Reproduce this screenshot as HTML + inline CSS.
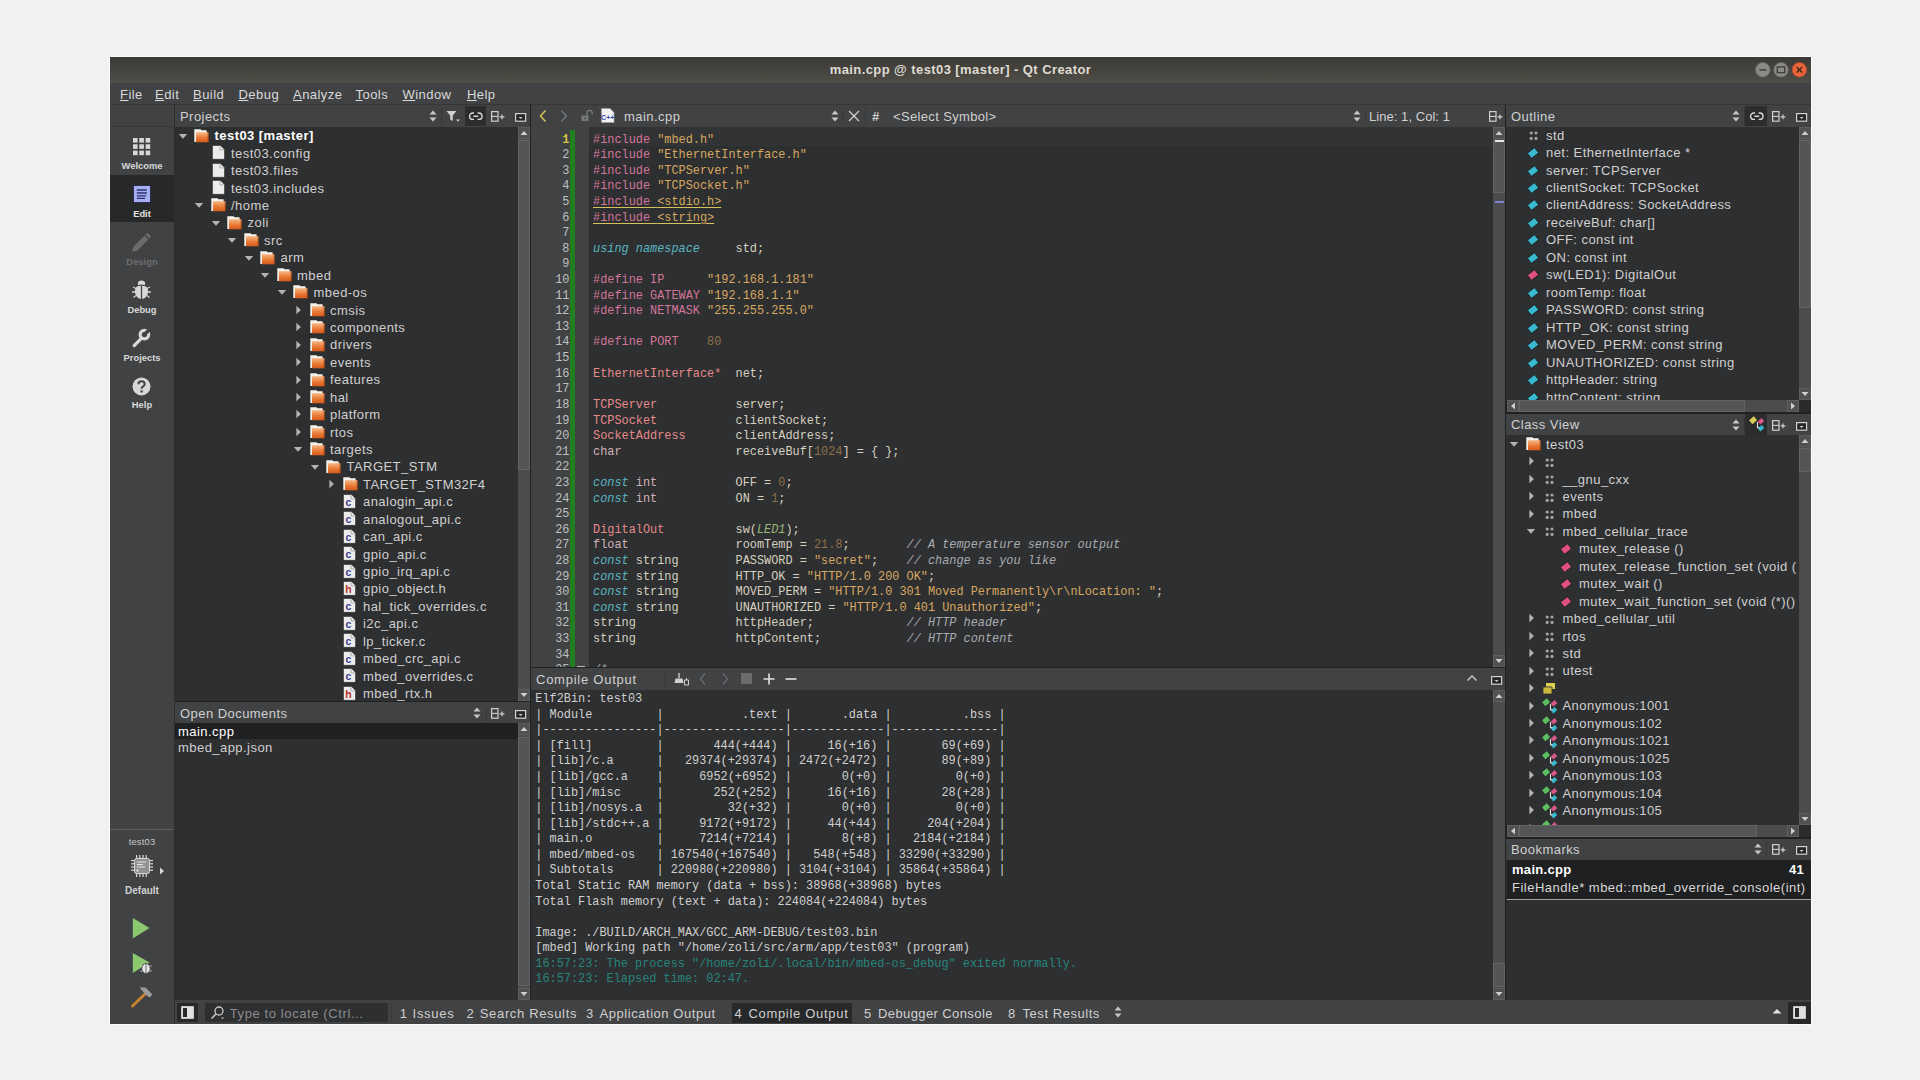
<!DOCTYPE html><html><head><meta charset="utf-8"><title>Qt Creator</title><style>
*{box-sizing:border-box;margin:0;padding:0}
html,body{width:1920px;height:1080px;overflow:hidden;background:#f1f1f1;font-family:"Liberation Sans",sans-serif}
.a{position:absolute}
.t{position:absolute;font-family:"Liberation Sans",sans-serif;font-size:13px;letter-spacing:0.45px;color:#d0d0d0;white-space:pre;line-height:16px;height:16px}
.m{position:absolute;font-family:"Liberation Mono",monospace;font-size:11.88px;white-space:pre;line-height:15.58px;color:#d6cfba}
svg{position:absolute;overflow:visible}
</style></head><body><div class="a" style="left:109px;top:56px;width:1703px;height:969px;background:#fbfbfb;"></div><div class="a" style="left:110px;top:57px;width:1701px;height:967px;background:#404244;"></div><div class="a" style="left:110px;top:57px;width:1701px;height:26px;background:linear-gradient(#3b3a36,#4e4d46);"></div><div class="t" style="left:110px;top:62.00px;color:#dfdbd2;width:1701px;text-align:center;font-weight:bold;letter-spacing:0.42px">main.cpp @ test03 [master] - Qt Creator</div><svg style="left:1755px;top:62px" width="52" height="16"><circle cx="7.8" cy="7.8" r="7.2" fill="#8b8a85" stroke="#6e6d69" stroke-width="0.8"/><rect x="4.3" y="7.2" width="7" height="1.4" fill="#3c3b37"/><circle cx="26" cy="7.8" r="7.2" fill="#8b8a85" stroke="#6e6d69" stroke-width="0.8"/><rect x="22.3" y="4.9" width="7.4" height="5.8" fill="none" stroke="#3c3b37" stroke-width="1.3"/><circle cx="44.4" cy="7.8" r="7.2" fill="#e8643a" stroke="#b84a27" stroke-width="0.8"/><path d="M41.6 5 L47.2 10.6 M47.2 5 L41.6 10.6" stroke="#3c2a20" stroke-width="1.4"/></svg><div class="t" style="left:120px;top:87px;color:#dadada"><span style="text-decoration:underline;text-underline-offset:1px">F</span>ile</div><div class="t" style="left:155px;top:87px;color:#dadada"><span style="text-decoration:underline;text-underline-offset:1px">E</span>dit</div><div class="t" style="left:193px;top:87px;color:#dadada"><span style="text-decoration:underline;text-underline-offset:1px">B</span>uild</div><div class="t" style="left:238.5px;top:87px;color:#dadada"><span style="text-decoration:underline;text-underline-offset:1px">D</span>ebug</div><div class="t" style="left:293px;top:87px;color:#dadada"><span style="text-decoration:underline;text-underline-offset:1px">A</span>nalyze</div><div class="t" style="left:355.5px;top:87px;color:#dadada"><span style="text-decoration:underline;text-underline-offset:1px">T</span>ools</div><div class="t" style="left:402.5px;top:87px;color:#dadada"><span style="text-decoration:underline;text-underline-offset:1px">W</span>indow</div><div class="t" style="left:467px;top:87px;color:#dadada"><span style="text-decoration:underline;text-underline-offset:1px">H</span>elp</div><svg width="0" height="0" style="position:absolute"><defs><linearGradient id="fg" x1="0" y1="0" x2="0" y2="1"><stop offset="0" stop-color="#f8b888"/><stop offset="0.55" stop-color="#e87a35"/><stop offset="1" stop-color="#d65a1c"/></linearGradient></defs></svg><div class="a" style="left:110px;top:105px;width:65px;height:919px;background:#404244;"></div><div class="a" style="left:174px;top:105px;width:1px;height:919px;background:#2b2c2e;"></div><div class="a" style="left:110px;top:104px;width:1701px;height:1px;background:#353638;"></div><div class="a" style="left:110px;top:126px;width:64px;height:1px;background:#353638;"></div><div class="a" style="left:110px;top:175px;width:64px;height:47px;background:#262829;"></div><svg style="left:131.6px;top:137.3px" width="20" height="20" viewBox="0 0 20 20"><rect x="1.0" y="1.0" width="4.6" height="4.6" fill="#d8d8d8"/><rect x="1.0" y="7.3" width="4.6" height="4.6" fill="#d8d8d8"/><rect x="1.0" y="13.6" width="4.6" height="4.6" fill="#d8d8d8"/><rect x="7.3" y="1.0" width="4.6" height="4.6" fill="#d8d8d8"/><rect x="7.3" y="7.3" width="4.6" height="4.6" fill="#d8d8d8"/><rect x="7.3" y="13.6" width="4.6" height="4.6" fill="#d8d8d8"/><rect x="13.6" y="1.0" width="4.6" height="4.6" fill="#d8d8d8"/><rect x="13.6" y="7.3" width="4.6" height="4.6" fill="#d8d8d8"/><rect x="13.6" y="13.6" width="4.6" height="4.6" fill="#d8d8d8"/></svg><div class="a" style="left:110px;top:160px;width:64px;text-align:center;font:bold 9.4px Liberation Sans;line-height:12px;color:#d8d8d8;white-space:pre">Welcome</div><svg style="left:132.5px;top:185.2px" width="18" height="18" viewBox="0 0 18 18"><rect x="0.4" y="0.4" width="17.2" height="17.2" fill="#a6aef2" stroke="#1a1c3a" stroke-width="0.8"/><path d="M3.8 5 H13.8 M3.8 8 H13.8 M3.8 10.8 H13.2 M3.8 13.4 H12" stroke="#283070" stroke-width="1.3"/></svg><div class="a" style="left:110px;top:208px;width:64px;text-align:center;font:bold 9.4px Liberation Sans;line-height:12px;color:#e0e0e0;white-space:pre">Edit</div><svg style="left:130px;top:231px" width="22" height="23" viewBox="0 0 22 23"><path d="M2 21 L3.6 15.6 L14.6 4.6 L18.4 8.4 L7.4 19.4 Z" fill="#6a6c6e"/><path d="M15.6 3.6 L17.4 1.8 L21.2 5.6 L19.4 7.4 Z" fill="#6a6c6e"/></svg><div class="a" style="left:110px;top:256px;width:64px;text-align:center;font:bold 9.4px Liberation Sans;line-height:12px;color:#6c6e70;white-space:pre">Design</div><svg style="left:131px;top:279px" width="21" height="21" viewBox="0 0 21 21"><path d="M2 8 L5 9.5 M19 8 L16 9.5 M1 13 H4.5 M20 13 H16.5 M2.5 18.5 L5 16.5 M18.5 18.5 L16 16.5" stroke="#d0d0d0" stroke-width="1.3"/><ellipse cx="10.5" cy="4.6" rx="3.6" ry="3.2" fill="#d8d8d8"/><ellipse cx="10.5" cy="12.6" rx="6.6" ry="7.4" fill="#d8d8d8"/><path d="M4.5 7.6 Q10.5 4.6 16.5 7.6" stroke="#404244" stroke-width="1.1" fill="none"/><path d="M10.5 7 V20.5" stroke="#404244" stroke-width="1.3"/></svg><div class="a" style="left:110px;top:304px;width:64px;text-align:center;font:bold 9.4px Liberation Sans;line-height:12px;color:#d8d8d8;white-space:pre">Debug</div><svg style="left:132px;top:327px" width="21" height="21" viewBox="0 0 21 21"><path d="M2.2 18.6 L9.6 11.2" stroke="#d8d8d8" stroke-width="3.2" stroke-linecap="round"/><circle cx="12.4" cy="7.6" r="4.3" stroke="#d8d8d8" stroke-width="3.2" fill="none"/><rect x="10.6" y="-1.5" width="3.6" height="9.1" transform="rotate(45 12.4 7.6)" fill="#404244"/></svg><div class="a" style="left:110px;top:352px;width:64px;text-align:center;font:bold 9.4px Liberation Sans;line-height:12px;color:#d8d8d8;white-space:pre">Projects</div><svg style="left:132px;top:377px" width="19" height="19" viewBox="0 0 19 19"><circle cx="9.5" cy="9.5" r="9" fill="#d8d8d8"/><path d="M6.4 7.2 Q6.4 4.2 9.6 4.2 Q12.7 4.2 12.7 7 Q12.7 8.6 10.8 9.6 Q9.6 10.3 9.6 11.8" fill="none" stroke="#404244" stroke-width="2"/><rect x="8.5" y="13.3" width="2.2" height="2.2" fill="#404244"/></svg><div class="a" style="left:110px;top:399px;width:64px;text-align:center;font:bold 9.4px Liberation Sans;line-height:12px;color:#d8d8d8;white-space:pre">Help</div><div class="a" style="left:110px;top:829px;width:64px;height:1.2px;background:#5a5c5e;"></div><div class="a" style="left:110px;top:836px;width:64px;text-align:center;font:9.4px Liberation Sans;line-height:12px;color:#c8c8c8;letter-spacing:0.2px">test03</div><svg style="left:130px;top:854px" width="24" height="24" viewBox="0 0 24 24"><rect x="4.5" y="4.5" width="15" height="15" rx="2" fill="#8e9092" stroke="#d8d8d8" stroke-width="1"/><rect x="6.0" y="1" width="1.2" height="3" fill="#d8d8d8"/><rect x="6.0" y="20" width="1.2" height="3" fill="#d8d8d8"/><rect x="1" y="6.0" width="3" height="1.2" fill="#d8d8d8"/><rect x="20" y="6.0" width="3" height="1.2" fill="#d8d8d8"/><rect x="9.2" y="1" width="1.2" height="3" fill="#d8d8d8"/><rect x="9.2" y="20" width="1.2" height="3" fill="#d8d8d8"/><rect x="1" y="9.2" width="3" height="1.2" fill="#d8d8d8"/><rect x="20" y="9.2" width="3" height="1.2" fill="#d8d8d8"/><rect x="12.4" y="1" width="1.2" height="3" fill="#d8d8d8"/><rect x="12.4" y="20" width="1.2" height="3" fill="#d8d8d8"/><rect x="1" y="12.4" width="3" height="1.2" fill="#d8d8d8"/><rect x="20" y="12.4" width="3" height="1.2" fill="#d8d8d8"/><rect x="15.600000000000001" y="1" width="1.2" height="3" fill="#d8d8d8"/><rect x="15.600000000000001" y="20" width="1.2" height="3" fill="#d8d8d8"/><rect x="1" y="15.600000000000001" width="3" height="1.2" fill="#d8d8d8"/><rect x="20" y="15.600000000000001" width="3" height="1.2" fill="#d8d8d8"/><path d="M7 8 H16 M7 10.5 H13 M7 13 H15" stroke="#e8e8e8" stroke-width="1"/><rect x="6.5" y="15.5" width="2" height="2" fill="#e8e8e8"/></svg><svg style="left:159px;top:867px" width="6" height="8" viewBox="0 0 6 8"><path d="M1 0.5 L5 4 L1 7.5 Z" fill="#d8d8d8"/></svg><div class="a" style="left:110px;top:885px;width:64px;text-align:center;font:bold 10px Liberation Sans;line-height:12px;color:#d0d0d0">Default</div><svg style="left:132px;top:917px" width="19" height="23" viewBox="0 0 19 23"><path d="M0.8 1 L17.5 11 L0.8 21.5 Z" fill="#8cc870"/></svg><svg style="left:132px;top:952px" width="19" height="23" viewBox="0 0 19 23"><path d="M0.8 1 L17.5 10.5 L0.8 21 Z" fill="#8cc870"/><path d="M8.5 14 H19.5 M8.5 19 H19.5" stroke="#e8e8e8" stroke-width="1.1"/><ellipse cx="14" cy="16.5" rx="4.2" ry="5" fill="#e8e8e8" stroke="#404244" stroke-width="0.9"/><path d="M14 12 V21.5" stroke="#7a7c7e" stroke-width="1.2"/></svg><svg style="left:128px;top:982px" width="26" height="28" viewBox="0 0 26 28"><path d="M4.5 24 L17 12" stroke="#c8842c" stroke-width="3" stroke-linecap="round"/><path d="M11.5 5.5 L17.5 5.5 L24.5 12.5 L21.5 15.5 L17.5 12.5 Z" fill="#9a9c9e"/></svg><div class="a" style="left:175px;top:105px;width:355px;height:22px;background:#404244;"></div><div class="t" style="left:180px;top:108.50px;color:#d0d0d0;">Projects</div><svg style="left:428px;top:109px" width="10" height="14" viewBox="0 0 10 14"><path d="M1.5 5.5 L5 1.5 L8.5 5.5 Z M1.5 8.5 L5 12.5 L8.5 8.5 Z" fill="#c8c8c8"/></svg><div class="a" style="left:441px;top:108px;width:1px;height:16px;background:#353739;"></div><svg style="left:446px;top:110px" width="14" height="13" viewBox="0 0 14 13"><path d="M0.5 1 H10.5 L6.8 5.5 V11 L4.2 9.5 V5.5 Z" fill="#d0d0d0"/><path d="M10 9.5 L12 11.8 L13.8 9.5 Z" fill="#d0d0d0"/></svg><div class="a" style="left:465px;top:106px;width:21px;height:20px;background:#2b2c2e;"></div><svg style="left:468.5px;top:111.5px" width="14" height="9" viewBox="0 0 14 9"><path d="M5 1 H3.8 A3.2 3.2 0 0 0 3.8 7.4 H5 M8.6 1 H9.8 A3.2 3.2 0 0 1 9.8 7.4 H8.6 M4.4 4.2 H9.2" fill="none" stroke="#d8d8d8" stroke-width="1.4"/></svg><svg style="left:491px;top:111px" width="15" height="11" viewBox="0 0 15 11"><rect x="0.6" y="0.6" width="6.4" height="9.6" fill="none" stroke="#d0d0d0" stroke-width="1.2"/><path d="M0.6 5.4 H7" stroke="#d0d0d0" stroke-width="1.1"/><path d="M8.6 5.8 H13.4 M11 3.4 V8.2" stroke="#d0d0d0" stroke-width="1.2"/></svg><svg style="left:514.5px;top:112.5px" width="12" height="10" viewBox="0 0 12 10"><rect x="0.6" y="0.6" width="10" height="7.6" fill="#262728" stroke="#d0d0d0" stroke-width="1.2"/><path d="M3.6 4 H7.6 L5.6 6 Z" fill="#d0d0d0"/></svg><div class="a" style="left:175px;top:127px;width:343px;height:574px;background:#2e2f30;"></div><div class="a" style="left:175px;top:127px;width:343px;height:574px;overflow:hidden"><div class="a" style="left:-175px;top:-127px;width:1920px;height:1080px"><svg style="left:177.5px;top:131.5px" width="10" height="8" viewBox="0 0 10 8"><path d="M0.8 2 L9.2 2 L5 6.8 Z" fill="#b4b4b4"/></svg><svg style="left:194.0px;top:128.5px" width="15" height="14" viewBox="0 0 15 14"><path d="M0.3 0.3 H6.5 L7.5 1.3 H12.6 V12.9 H0.3 Z" fill="#f6f2ea"/><path d="M2 3.2 H14.6 V13.3 H2 Z" fill="url(#fg)"/><path d="M14.2 3.2 V13.3" stroke="#8a3a10" stroke-width="0.8"/></svg><div class="t" style="left:214.5px;top:128.30px;color:#ffffff;font-weight:bold">test03 [master]</div><svg style="left:211.7px;top:145.23000000000002px" width="13" height="15" viewBox="0 0 13 15"><path d="M0.5 0.5 H8.6 L12.5 4.4 V14.3 H0.5 Z" fill="#ececec" stroke="#1e1e1e" stroke-width="0.5"/><path d="M8.1 0.8 V4.9 H12.2" fill="none" stroke="#9a9a9a" stroke-width="0.8"/></svg><div class="t" style="left:231.0px;top:145.73px;color:#d0d0d0;">test03.config</div><svg style="left:211.7px;top:162.66000000000003px" width="13" height="15" viewBox="0 0 13 15"><path d="M0.5 0.5 H8.6 L12.5 4.4 V14.3 H0.5 Z" fill="#ececec" stroke="#1e1e1e" stroke-width="0.5"/><path d="M8.1 0.8 V4.9 H12.2" fill="none" stroke="#9a9a9a" stroke-width="0.8"/></svg><div class="t" style="left:231.0px;top:163.16px;color:#d0d0d0;">test03.files</div><svg style="left:211.7px;top:180.09px" width="13" height="15" viewBox="0 0 13 15"><path d="M0.5 0.5 H8.6 L12.5 4.4 V14.3 H0.5 Z" fill="#ececec" stroke="#1e1e1e" stroke-width="0.5"/><path d="M8.1 0.8 V4.9 H12.2" fill="none" stroke="#9a9a9a" stroke-width="0.8"/></svg><div class="t" style="left:231.0px;top:180.59px;color:#d0d0d0;">test03.includes</div><svg style="left:194.0px;top:201.22px" width="10" height="8" viewBox="0 0 10 8"><path d="M0.8 2 L9.2 2 L5 6.8 Z" fill="#b4b4b4"/></svg><svg style="left:210.5px;top:198.22px" width="15" height="14" viewBox="0 0 15 14"><path d="M0.3 0.3 H6.5 L7.5 1.3 H12.6 V12.9 H0.3 Z" fill="#f6f2ea"/><path d="M2 3.2 H14.6 V13.3 H2 Z" fill="url(#fg)"/><path d="M14.2 3.2 V13.3" stroke="#8a3a10" stroke-width="0.8"/></svg><div class="t" style="left:231.0px;top:198.02px;color:#d0d0d0;">/home</div><svg style="left:210.5px;top:218.65px" width="10" height="8" viewBox="0 0 10 8"><path d="M0.8 2 L9.2 2 L5 6.8 Z" fill="#b4b4b4"/></svg><svg style="left:227.0px;top:215.65px" width="15" height="14" viewBox="0 0 15 14"><path d="M0.3 0.3 H6.5 L7.5 1.3 H12.6 V12.9 H0.3 Z" fill="#f6f2ea"/><path d="M2 3.2 H14.6 V13.3 H2 Z" fill="url(#fg)"/><path d="M14.2 3.2 V13.3" stroke="#8a3a10" stroke-width="0.8"/></svg><div class="t" style="left:247.5px;top:215.45px;color:#d0d0d0;">zoli</div><svg style="left:227.0px;top:236.07999999999998px" width="10" height="8" viewBox="0 0 10 8"><path d="M0.8 2 L9.2 2 L5 6.8 Z" fill="#b4b4b4"/></svg><svg style="left:243.5px;top:233.07999999999998px" width="15" height="14" viewBox="0 0 15 14"><path d="M0.3 0.3 H6.5 L7.5 1.3 H12.6 V12.9 H0.3 Z" fill="#f6f2ea"/><path d="M2 3.2 H14.6 V13.3 H2 Z" fill="url(#fg)"/><path d="M14.2 3.2 V13.3" stroke="#8a3a10" stroke-width="0.8"/></svg><div class="t" style="left:264.0px;top:232.88px;color:#d0d0d0;">src</div><svg style="left:243.5px;top:253.51px" width="10" height="8" viewBox="0 0 10 8"><path d="M0.8 2 L9.2 2 L5 6.8 Z" fill="#b4b4b4"/></svg><svg style="left:260.0px;top:250.51px" width="15" height="14" viewBox="0 0 15 14"><path d="M0.3 0.3 H6.5 L7.5 1.3 H12.6 V12.9 H0.3 Z" fill="#f6f2ea"/><path d="M2 3.2 H14.6 V13.3 H2 Z" fill="url(#fg)"/><path d="M14.2 3.2 V13.3" stroke="#8a3a10" stroke-width="0.8"/></svg><div class="t" style="left:280.5px;top:250.31px;color:#d0d0d0;">arm</div><svg style="left:260.0px;top:270.94px" width="10" height="8" viewBox="0 0 10 8"><path d="M0.8 2 L9.2 2 L5 6.8 Z" fill="#b4b4b4"/></svg><svg style="left:276.5px;top:267.94px" width="15" height="14" viewBox="0 0 15 14"><path d="M0.3 0.3 H6.5 L7.5 1.3 H12.6 V12.9 H0.3 Z" fill="#f6f2ea"/><path d="M2 3.2 H14.6 V13.3 H2 Z" fill="url(#fg)"/><path d="M14.2 3.2 V13.3" stroke="#8a3a10" stroke-width="0.8"/></svg><div class="t" style="left:297.0px;top:267.74px;color:#d0d0d0;">mbed</div><svg style="left:276.5px;top:288.37px" width="10" height="8" viewBox="0 0 10 8"><path d="M0.8 2 L9.2 2 L5 6.8 Z" fill="#b4b4b4"/></svg><svg style="left:293.0px;top:285.37px" width="15" height="14" viewBox="0 0 15 14"><path d="M0.3 0.3 H6.5 L7.5 1.3 H12.6 V12.9 H0.3 Z" fill="#f6f2ea"/><path d="M2 3.2 H14.6 V13.3 H2 Z" fill="url(#fg)"/><path d="M14.2 3.2 V13.3" stroke="#8a3a10" stroke-width="0.8"/></svg><div class="t" style="left:313.5px;top:285.17px;color:#d0d0d0;">mbed-os</div><svg style="left:294.0px;top:304.8px" width="8" height="10" viewBox="0 0 8 10"><path d="M2.4 0.8 L6.9 5 L2.4 9.2 Z" fill="#b4b4b4"/></svg><svg style="left:309.5px;top:302.8px" width="15" height="14" viewBox="0 0 15 14"><path d="M0.3 0.3 H6.5 L7.5 1.3 H12.6 V12.9 H0.3 Z" fill="#f6f2ea"/><path d="M2 3.2 H14.6 V13.3 H2 Z" fill="url(#fg)"/><path d="M14.2 3.2 V13.3" stroke="#8a3a10" stroke-width="0.8"/></svg><div class="t" style="left:330.0px;top:302.60px;color:#d0d0d0;">cmsis</div><svg style="left:294.0px;top:322.22999999999996px" width="8" height="10" viewBox="0 0 8 10"><path d="M2.4 0.8 L6.9 5 L2.4 9.2 Z" fill="#b4b4b4"/></svg><svg style="left:309.5px;top:320.22999999999996px" width="15" height="14" viewBox="0 0 15 14"><path d="M0.3 0.3 H6.5 L7.5 1.3 H12.6 V12.9 H0.3 Z" fill="#f6f2ea"/><path d="M2 3.2 H14.6 V13.3 H2 Z" fill="url(#fg)"/><path d="M14.2 3.2 V13.3" stroke="#8a3a10" stroke-width="0.8"/></svg><div class="t" style="left:330.0px;top:320.03px;color:#d0d0d0;">components</div><svg style="left:294.0px;top:339.66px" width="8" height="10" viewBox="0 0 8 10"><path d="M2.4 0.8 L6.9 5 L2.4 9.2 Z" fill="#b4b4b4"/></svg><svg style="left:309.5px;top:337.66px" width="15" height="14" viewBox="0 0 15 14"><path d="M0.3 0.3 H6.5 L7.5 1.3 H12.6 V12.9 H0.3 Z" fill="#f6f2ea"/><path d="M2 3.2 H14.6 V13.3 H2 Z" fill="url(#fg)"/><path d="M14.2 3.2 V13.3" stroke="#8a3a10" stroke-width="0.8"/></svg><div class="t" style="left:330.0px;top:337.46px;color:#d0d0d0;">drivers</div><svg style="left:294.0px;top:357.09px" width="8" height="10" viewBox="0 0 8 10"><path d="M2.4 0.8 L6.9 5 L2.4 9.2 Z" fill="#b4b4b4"/></svg><svg style="left:309.5px;top:355.09px" width="15" height="14" viewBox="0 0 15 14"><path d="M0.3 0.3 H6.5 L7.5 1.3 H12.6 V12.9 H0.3 Z" fill="#f6f2ea"/><path d="M2 3.2 H14.6 V13.3 H2 Z" fill="url(#fg)"/><path d="M14.2 3.2 V13.3" stroke="#8a3a10" stroke-width="0.8"/></svg><div class="t" style="left:330.0px;top:354.89px;color:#d0d0d0;">events</div><svg style="left:294.0px;top:374.52px" width="8" height="10" viewBox="0 0 8 10"><path d="M2.4 0.8 L6.9 5 L2.4 9.2 Z" fill="#b4b4b4"/></svg><svg style="left:309.5px;top:372.52px" width="15" height="14" viewBox="0 0 15 14"><path d="M0.3 0.3 H6.5 L7.5 1.3 H12.6 V12.9 H0.3 Z" fill="#f6f2ea"/><path d="M2 3.2 H14.6 V13.3 H2 Z" fill="url(#fg)"/><path d="M14.2 3.2 V13.3" stroke="#8a3a10" stroke-width="0.8"/></svg><div class="t" style="left:330.0px;top:372.32px;color:#d0d0d0;">features</div><svg style="left:294.0px;top:391.95px" width="8" height="10" viewBox="0 0 8 10"><path d="M2.4 0.8 L6.9 5 L2.4 9.2 Z" fill="#b4b4b4"/></svg><svg style="left:309.5px;top:389.95px" width="15" height="14" viewBox="0 0 15 14"><path d="M0.3 0.3 H6.5 L7.5 1.3 H12.6 V12.9 H0.3 Z" fill="#f6f2ea"/><path d="M2 3.2 H14.6 V13.3 H2 Z" fill="url(#fg)"/><path d="M14.2 3.2 V13.3" stroke="#8a3a10" stroke-width="0.8"/></svg><div class="t" style="left:330.0px;top:389.75px;color:#d0d0d0;">hal</div><svg style="left:294.0px;top:409.38px" width="8" height="10" viewBox="0 0 8 10"><path d="M2.4 0.8 L6.9 5 L2.4 9.2 Z" fill="#b4b4b4"/></svg><svg style="left:309.5px;top:407.38px" width="15" height="14" viewBox="0 0 15 14"><path d="M0.3 0.3 H6.5 L7.5 1.3 H12.6 V12.9 H0.3 Z" fill="#f6f2ea"/><path d="M2 3.2 H14.6 V13.3 H2 Z" fill="url(#fg)"/><path d="M14.2 3.2 V13.3" stroke="#8a3a10" stroke-width="0.8"/></svg><div class="t" style="left:330.0px;top:407.18px;color:#d0d0d0;">platform</div><svg style="left:294.0px;top:426.81px" width="8" height="10" viewBox="0 0 8 10"><path d="M2.4 0.8 L6.9 5 L2.4 9.2 Z" fill="#b4b4b4"/></svg><svg style="left:309.5px;top:424.81px" width="15" height="14" viewBox="0 0 15 14"><path d="M0.3 0.3 H6.5 L7.5 1.3 H12.6 V12.9 H0.3 Z" fill="#f6f2ea"/><path d="M2 3.2 H14.6 V13.3 H2 Z" fill="url(#fg)"/><path d="M14.2 3.2 V13.3" stroke="#8a3a10" stroke-width="0.8"/></svg><div class="t" style="left:330.0px;top:424.61px;color:#d0d0d0;">rtos</div><svg style="left:293.0px;top:445.24px" width="10" height="8" viewBox="0 0 10 8"><path d="M0.8 2 L9.2 2 L5 6.8 Z" fill="#b4b4b4"/></svg><svg style="left:309.5px;top:442.24px" width="15" height="14" viewBox="0 0 15 14"><path d="M0.3 0.3 H6.5 L7.5 1.3 H12.6 V12.9 H0.3 Z" fill="#f6f2ea"/><path d="M2 3.2 H14.6 V13.3 H2 Z" fill="url(#fg)"/><path d="M14.2 3.2 V13.3" stroke="#8a3a10" stroke-width="0.8"/></svg><div class="t" style="left:330.0px;top:442.04px;color:#d0d0d0;">targets</div><svg style="left:309.5px;top:462.67px" width="10" height="8" viewBox="0 0 10 8"><path d="M0.8 2 L9.2 2 L5 6.8 Z" fill="#b4b4b4"/></svg><svg style="left:326.0px;top:459.67px" width="15" height="14" viewBox="0 0 15 14"><path d="M0.3 0.3 H6.5 L7.5 1.3 H12.6 V12.9 H0.3 Z" fill="#f6f2ea"/><path d="M2 3.2 H14.6 V13.3 H2 Z" fill="url(#fg)"/><path d="M14.2 3.2 V13.3" stroke="#8a3a10" stroke-width="0.8"/></svg><div class="t" style="left:346.5px;top:459.47px;color:#d0d0d0;">TARGET_STM</div><svg style="left:327.0px;top:479.1px" width="8" height="10" viewBox="0 0 8 10"><path d="M2.4 0.8 L6.9 5 L2.4 9.2 Z" fill="#b4b4b4"/></svg><svg style="left:342.5px;top:477.1px" width="15" height="14" viewBox="0 0 15 14"><path d="M0.3 0.3 H6.5 L7.5 1.3 H12.6 V12.9 H0.3 Z" fill="#f6f2ea"/><path d="M2 3.2 H14.6 V13.3 H2 Z" fill="url(#fg)"/><path d="M14.2 3.2 V13.3" stroke="#8a3a10" stroke-width="0.8"/></svg><div class="t" style="left:363.0px;top:476.90px;color:#d0d0d0;">TARGET_STM32F4</div><svg style="left:343.1px;top:493.83px" width="13" height="15" viewBox="0 0 13 15"><path d="M0.5 0.5 H8.6 L12.5 4.4 V14.3 H0.5 Z" fill="#ececec" stroke="#1e1e1e" stroke-width="0.5"/><path d="M8.1 0.8 V4.9 H12.2" fill="none" stroke="#9a9a9a" stroke-width="0.8"/><text x="5.4" y="12.4" font-family="Liberation Sans" font-weight="bold" font-size="10.5" text-anchor="middle" fill="#383890">c</text></svg><div class="t" style="left:363.0px;top:494.33px;color:#d0d0d0;">analogin_api.c</div><svg style="left:343.1px;top:511.26px" width="13" height="15" viewBox="0 0 13 15"><path d="M0.5 0.5 H8.6 L12.5 4.4 V14.3 H0.5 Z" fill="#ececec" stroke="#1e1e1e" stroke-width="0.5"/><path d="M8.1 0.8 V4.9 H12.2" fill="none" stroke="#9a9a9a" stroke-width="0.8"/><text x="5.4" y="12.4" font-family="Liberation Sans" font-weight="bold" font-size="10.5" text-anchor="middle" fill="#383890">c</text></svg><div class="t" style="left:363.0px;top:511.76px;color:#d0d0d0;">analogout_api.c</div><svg style="left:343.1px;top:528.69px" width="13" height="15" viewBox="0 0 13 15"><path d="M0.5 0.5 H8.6 L12.5 4.4 V14.3 H0.5 Z" fill="#ececec" stroke="#1e1e1e" stroke-width="0.5"/><path d="M8.1 0.8 V4.9 H12.2" fill="none" stroke="#9a9a9a" stroke-width="0.8"/><text x="5.4" y="12.4" font-family="Liberation Sans" font-weight="bold" font-size="10.5" text-anchor="middle" fill="#383890">c</text></svg><div class="t" style="left:363.0px;top:529.19px;color:#d0d0d0;">can_api.c</div><svg style="left:343.1px;top:546.12px" width="13" height="15" viewBox="0 0 13 15"><path d="M0.5 0.5 H8.6 L12.5 4.4 V14.3 H0.5 Z" fill="#ececec" stroke="#1e1e1e" stroke-width="0.5"/><path d="M8.1 0.8 V4.9 H12.2" fill="none" stroke="#9a9a9a" stroke-width="0.8"/><text x="5.4" y="12.4" font-family="Liberation Sans" font-weight="bold" font-size="10.5" text-anchor="middle" fill="#383890">c</text></svg><div class="t" style="left:363.0px;top:546.62px;color:#d0d0d0;">gpio_api.c</div><svg style="left:343.1px;top:563.55px" width="13" height="15" viewBox="0 0 13 15"><path d="M0.5 0.5 H8.6 L12.5 4.4 V14.3 H0.5 Z" fill="#ececec" stroke="#1e1e1e" stroke-width="0.5"/><path d="M8.1 0.8 V4.9 H12.2" fill="none" stroke="#9a9a9a" stroke-width="0.8"/><text x="5.4" y="12.4" font-family="Liberation Sans" font-weight="bold" font-size="10.5" text-anchor="middle" fill="#383890">c</text></svg><div class="t" style="left:363.0px;top:564.05px;color:#d0d0d0;">gpio_irq_api.c</div><svg style="left:343.1px;top:580.98px" width="13" height="15" viewBox="0 0 13 15"><path d="M0.5 0.5 H8.6 L12.5 4.4 V14.3 H0.5 Z" fill="#ececec" stroke="#1e1e1e" stroke-width="0.5"/><path d="M8.1 0.8 V4.9 H12.2" fill="none" stroke="#9a9a9a" stroke-width="0.8"/><text x="5.4" y="12.4" font-family="Liberation Sans" font-weight="bold" font-size="10.5" text-anchor="middle" fill="#b83028">h</text></svg><div class="t" style="left:363.0px;top:581.48px;color:#d0d0d0;">gpio_object.h</div><svg style="left:343.1px;top:598.4100000000001px" width="13" height="15" viewBox="0 0 13 15"><path d="M0.5 0.5 H8.6 L12.5 4.4 V14.3 H0.5 Z" fill="#ececec" stroke="#1e1e1e" stroke-width="0.5"/><path d="M8.1 0.8 V4.9 H12.2" fill="none" stroke="#9a9a9a" stroke-width="0.8"/><text x="5.4" y="12.4" font-family="Liberation Sans" font-weight="bold" font-size="10.5" text-anchor="middle" fill="#383890">c</text></svg><div class="t" style="left:363.0px;top:598.91px;color:#d0d0d0;">hal_tick_overrides.c</div><svg style="left:343.1px;top:615.8399999999999px" width="13" height="15" viewBox="0 0 13 15"><path d="M0.5 0.5 H8.6 L12.5 4.4 V14.3 H0.5 Z" fill="#ececec" stroke="#1e1e1e" stroke-width="0.5"/><path d="M8.1 0.8 V4.9 H12.2" fill="none" stroke="#9a9a9a" stroke-width="0.8"/><text x="5.4" y="12.4" font-family="Liberation Sans" font-weight="bold" font-size="10.5" text-anchor="middle" fill="#383890">c</text></svg><div class="t" style="left:363.0px;top:616.34px;color:#d0d0d0;">i2c_api.c</div><svg style="left:343.1px;top:633.27px" width="13" height="15" viewBox="0 0 13 15"><path d="M0.5 0.5 H8.6 L12.5 4.4 V14.3 H0.5 Z" fill="#ececec" stroke="#1e1e1e" stroke-width="0.5"/><path d="M8.1 0.8 V4.9 H12.2" fill="none" stroke="#9a9a9a" stroke-width="0.8"/><text x="5.4" y="12.4" font-family="Liberation Sans" font-weight="bold" font-size="10.5" text-anchor="middle" fill="#383890">c</text></svg><div class="t" style="left:363.0px;top:633.77px;color:#d0d0d0;">lp_ticker.c</div><svg style="left:343.1px;top:650.7px" width="13" height="15" viewBox="0 0 13 15"><path d="M0.5 0.5 H8.6 L12.5 4.4 V14.3 H0.5 Z" fill="#ececec" stroke="#1e1e1e" stroke-width="0.5"/><path d="M8.1 0.8 V4.9 H12.2" fill="none" stroke="#9a9a9a" stroke-width="0.8"/><text x="5.4" y="12.4" font-family="Liberation Sans" font-weight="bold" font-size="10.5" text-anchor="middle" fill="#383890">c</text></svg><div class="t" style="left:363.0px;top:651.20px;color:#d0d0d0;">mbed_crc_api.c</div><svg style="left:343.1px;top:668.1300000000001px" width="13" height="15" viewBox="0 0 13 15"><path d="M0.5 0.5 H8.6 L12.5 4.4 V14.3 H0.5 Z" fill="#ececec" stroke="#1e1e1e" stroke-width="0.5"/><path d="M8.1 0.8 V4.9 H12.2" fill="none" stroke="#9a9a9a" stroke-width="0.8"/><text x="5.4" y="12.4" font-family="Liberation Sans" font-weight="bold" font-size="10.5" text-anchor="middle" fill="#383890">c</text></svg><div class="t" style="left:363.0px;top:668.63px;color:#d0d0d0;">mbed_overrides.c</div><svg style="left:343.1px;top:685.56px" width="13" height="15" viewBox="0 0 13 15"><path d="M0.5 0.5 H8.6 L12.5 4.4 V14.3 H0.5 Z" fill="#ececec" stroke="#1e1e1e" stroke-width="0.5"/><path d="M8.1 0.8 V4.9 H12.2" fill="none" stroke="#9a9a9a" stroke-width="0.8"/><text x="5.4" y="12.4" font-family="Liberation Sans" font-weight="bold" font-size="10.5" text-anchor="middle" fill="#b83028">h</text></svg><div class="t" style="left:363.0px;top:686.06px;color:#d0d0d0;">mbed_rtx.h</div></div></div><div class="a" style="left:518px;top:127px;width:12px;height:574px;background:#4a4c4e;"></div><div class="a" style="left:518px;top:140px;width:12px;height:330px;background:#535557;border:1px solid #626466"></div><div class="a" style="left:518px;top:127px;width:12px;height:12px;background:#4e5052;border:1px solid #5c5e60"></div><svg style="left:518px;top:127px" width="12" height="12" viewBox="0 0 12 12"><path d="M2.5 8 L6 4 L9.5 8 Z" fill="#cfcfcf"/></svg><div class="a" style="left:518px;top:689px;width:12px;height:12px;background:#4e5052;border:1px solid #5c5e60"></div><svg style="left:518px;top:689px" width="12" height="12" viewBox="0 0 12 12"><path d="M2.5 4 L6 8 L9.5 4 Z" fill="#cfcfcf"/></svg><div class="a" style="left:175px;top:701px;width:355px;height:1px;background:#202122;"></div><div class="a" style="left:175px;top:702px;width:355px;height:21px;background:#404244;"></div><div class="t" style="left:180px;top:705.50px;color:#d0d0d0;">Open Documents</div><svg style="left:472px;top:706px" width="10" height="14" viewBox="0 0 10 14"><path d="M1.5 5.5 L5 1.5 L8.5 5.5 Z M1.5 8.5 L5 12.5 L8.5 8.5 Z" fill="#c8c8c8"/></svg><div class="a" style="left:486px;top:705px;width:1px;height:16px;background:#353739;"></div><svg style="left:491px;top:708px" width="15" height="11" viewBox="0 0 15 11"><rect x="0.6" y="0.6" width="6.4" height="9.6" fill="none" stroke="#d0d0d0" stroke-width="1.2"/><path d="M0.6 5.4 H7" stroke="#d0d0d0" stroke-width="1.1"/><path d="M8.6 5.8 H13.4 M11 3.4 V8.2" stroke="#d0d0d0" stroke-width="1.2"/></svg><svg style="left:514.5px;top:709.5px" width="12" height="10" viewBox="0 0 12 10"><rect x="0.6" y="0.6" width="10" height="7.6" fill="#262728" stroke="#d0d0d0" stroke-width="1.2"/><path d="M3.6 4 H7.6 L5.6 6 Z" fill="#d0d0d0"/></svg><div class="a" style="left:175px;top:723px;width:343px;height:277px;background:#2e2f30;"></div><div class="a" style="left:175px;top:723px;width:343px;height:16px;background:#1f2021;"></div><div class="t" style="left:178px;top:724.00px;color:#ffffff;">main.cpp</div><div class="t" style="left:178px;top:740.00px;color:#d0d0d0;">mbed_app.json</div><div class="a" style="left:518px;top:723px;width:12px;height:277px;background:#4a4c4e;"></div><div class="a" style="left:518px;top:737px;width:12px;height:249px;background:#535557;border:1px solid #626466"></div><div class="a" style="left:518px;top:723px;width:12px;height:12px;background:#4e5052;border:1px solid #5c5e60"></div><svg style="left:518px;top:723px" width="12" height="12" viewBox="0 0 12 12"><path d="M2.5 8 L6 4 L9.5 8 Z" fill="#cfcfcf"/></svg><div class="a" style="left:518px;top:988px;width:12px;height:12px;background:#4e5052;border:1px solid #5c5e60"></div><svg style="left:518px;top:988px" width="12" height="12" viewBox="0 0 12 12"><path d="M2.5 4 L6 8 L9.5 4 Z" fill="#cfcfcf"/></svg><div class="a" style="left:530px;top:105px;width:1px;height:895px;background:#202122;"></div><div class="a" style="left:531px;top:105px;width:974px;height:22px;background:#404244;"></div><svg style="left:538px;top:109px" width="10" height="14" viewBox="0 0 10 14"><path d="M7.5 1.5 L2.5 7 L7.5 12.5" fill="none" stroke="#d6c25a" stroke-width="1.5"/></svg><svg style="left:559px;top:109px" width="10" height="14" viewBox="0 0 10 14"><path d="M2.5 1.5 L7.5 7 L2.5 12.5" fill="none" stroke="#77797b" stroke-width="1.3"/></svg><svg style="left:581px;top:109px" width="13" height="14" viewBox="0 0 13 14"><rect x="0.5" y="6.5" width="7" height="5.5" fill="#77797b"/><rect x="3.2" y="8.5" width="1.6" height="1.6" fill="#404244"/><path d="M6 6.5 V4 A2.6 2.6 0 0 1 11.2 4 V5.5" fill="none" stroke="#77797b" stroke-width="1.2"/></svg><svg style="left:601px;top:108px" width="14" height="15" viewBox="0 0 14 15"><path d="M0.5 0.5 H9 L13 4.5 V14.5 H0.5 Z" fill="#f2f2f2" stroke="#a0a0a0" stroke-width="0.6"/><text x="6.7" y="12" font-family="Liberation Sans" font-weight="bold" font-size="7" text-anchor="middle" fill="#3a4ab0">C++</text></svg><div class="t" style="left:624px;top:109.00px;color:#d0d0d0;">main.cpp</div><svg style="left:829.5px;top:109px" width="10" height="14" viewBox="0 0 10 14"><path d="M1.5 5.5 L5 1.5 L8.5 5.5 Z M1.5 8.5 L5 12.5 L8.5 8.5 Z" fill="#c8c8c8"/></svg><div class="a" style="left:842px;top:108px;width:1px;height:16px;background:#353739;"></div><svg style="left:848px;top:110px" width="12" height="12" viewBox="0 0 12 12"><path d="M1 1 L11 11 M11 1 L1 11" stroke="#d0d0d0" stroke-width="1.3"/></svg><div class="a" style="left:865px;top:108px;width:1px;height:16px;background:#353739;"></div><div class="t" style="left:872px;top:109.00px;color:#d0d0d0;font-weight:bold">#</div><div class="t" style="left:893px;top:109.00px;color:#d0d0d0;letter-spacing:0.35px">&lt;Select Symbol&gt;</div><svg style="left:1352px;top:109px" width="10" height="14" viewBox="0 0 10 14"><path d="M1.5 5.5 L5 1.5 L8.5 5.5 Z M1.5 8.5 L5 12.5 L8.5 8.5 Z" fill="#c8c8c8"/></svg><div class="a" style="left:1365px;top:108px;width:1px;height:16px;background:#353739;"></div><div class="t" style="left:1369px;top:109.00px;color:#d0d0d0;letter-spacing:0.05px">Line: 1, Col: 1</div><svg style="left:1489px;top:111px" width="15" height="11" viewBox="0 0 15 11"><rect x="0.6" y="0.6" width="6.4" height="9.6" fill="none" stroke="#d0d0d0" stroke-width="1.2"/><path d="M0.6 5.4 H7" stroke="#d0d0d0" stroke-width="1.1"/><path d="M8.6 5.8 H13.4 M11 3.4 V8.2" stroke="#d0d0d0" stroke-width="1.2"/></svg><div class="a" style="left:531px;top:127px;width:58px;height:540px;background:#404244;"></div><div class="a" style="left:589px;top:127px;width:904px;height:540px;background:#2e2f30;"></div><div class="a" style="left:589px;top:127px;width:904px;height:18.5px;background:#323334;"></div><div class="a" style="left:570px;top:130px;width:4.5px;height:537px;background:#208020;"></div><div class="a" style="left:531px;top:127px;width:962px;height:540px;overflow:hidden"><div class="a" style="left:-531px;top:-127px;width:1920px;height:1080px"><div class="m" style="left:531px;top:132.61px;width:38.5px;text-align:right;color:#d6c540;font-weight:bold;">1</div><div class="m" style="left:593px;top:132.61px"><span style="color:#d2769a">#include </span><span style="color:#d6a862">"mbed.h"</span></div><div class="m" style="left:531px;top:148.22px;width:38.5px;text-align:right;color:#bec0c1;">2</div><div class="m" style="left:593px;top:148.22px"><span style="color:#d2769a">#include </span><span style="color:#d6a862">"EthernetInterface.h"</span></div><div class="m" style="left:531px;top:163.82px;width:38.5px;text-align:right;color:#bec0c1;">3</div><div class="m" style="left:593px;top:163.82px"><span style="color:#d2769a">#include </span><span style="color:#d6a862">"TCPServer.h"</span></div><div class="m" style="left:531px;top:179.43px;width:38.5px;text-align:right;color:#bec0c1;">4</div><div class="m" style="left:593px;top:179.43px"><span style="color:#d2769a">#include </span><span style="color:#d6a862">"TCPSocket.h"</span></div><div class="m" style="left:531px;top:195.03px;width:38.5px;text-align:right;color:#bec0c1;">5</div><div class="m" style="left:593px;top:195.03px"><span style="color:#d2769a;text-decoration:underline;text-decoration-color:#d6c25a;text-underline-offset:2px">#include </span><span style="color:#d6a862;text-decoration:underline;text-decoration-color:#d6c25a;text-underline-offset:2px">&lt;stdio.h&gt;</span></div><div class="m" style="left:531px;top:210.64px;width:38.5px;text-align:right;color:#bec0c1;">6</div><div class="m" style="left:593px;top:210.64px"><span style="color:#d2769a;text-decoration:underline;text-decoration-color:#d6c25a;text-underline-offset:2px">#include </span><span style="color:#d6a862;text-decoration:underline;text-decoration-color:#d6c25a;text-underline-offset:2px">&lt;string&gt;</span></div><div class="m" style="left:531px;top:226.24px;width:38.5px;text-align:right;color:#bec0c1;">7</div><div class="m" style="left:531px;top:241.84px;width:38.5px;text-align:right;color:#bec0c1;">8</div><div class="m" style="left:593px;top:241.84px"><span style="color:#5ab6c2;font-style:italic">using</span><span style="color:#d6d0c0"> </span><span style="color:#5ab6c2;font-style:italic">namespace</span><span style="color:#d6d0c0">     std;</span></div><div class="m" style="left:531px;top:257.45px;width:38.5px;text-align:right;color:#bec0c1;">9</div><div class="m" style="left:531px;top:273.06px;width:38.5px;text-align:right;color:#bec0c1;">10</div><div class="m" style="left:593px;top:273.06px"><span style="color:#d2769a">#define IP      </span><span style="color:#d6a862">"192.168.1.181"</span></div><div class="m" style="left:531px;top:288.66px;width:38.5px;text-align:right;color:#bec0c1;">11</div><div class="m" style="left:593px;top:288.66px"><span style="color:#d2769a">#define GATEWAY </span><span style="color:#d6a862">"192.168.1.1"</span></div><div class="m" style="left:531px;top:304.26px;width:38.5px;text-align:right;color:#bec0c1;">12</div><div class="m" style="left:593px;top:304.26px"><span style="color:#d2769a">#define NETMASK </span><span style="color:#d6a862">"255.255.255.0"</span></div><div class="m" style="left:531px;top:319.87px;width:38.5px;text-align:right;color:#bec0c1;">13</div><div class="m" style="left:531px;top:335.47px;width:38.5px;text-align:right;color:#bec0c1;">14</div><div class="m" style="left:593px;top:335.47px"><span style="color:#d2769a">#define PORT    </span><span style="color:#8c7048">80</span></div><div class="m" style="left:531px;top:351.08px;width:38.5px;text-align:right;color:#bec0c1;">15</div><div class="m" style="left:531px;top:366.69px;width:38.5px;text-align:right;color:#bec0c1;">16</div><div class="m" style="left:593px;top:366.69px"><span style="color:#e48a8a">EthernetInterface*</span><span style="color:#d6d0c0">  net;</span></div><div class="m" style="left:531px;top:382.29px;width:38.5px;text-align:right;color:#bec0c1;">17</div><div class="m" style="left:531px;top:397.90px;width:38.5px;text-align:right;color:#bec0c1;">18</div><div class="m" style="left:593px;top:397.90px"><span style="color:#e48a8a">TCPServer           </span><span style="color:#d6d0c0">server;</span></div><div class="m" style="left:531px;top:413.50px;width:38.5px;text-align:right;color:#bec0c1;">19</div><div class="m" style="left:593px;top:413.50px"><span style="color:#e48a8a">TCPSocket           </span><span style="color:#d6d0c0">clientSocket;</span></div><div class="m" style="left:531px;top:429.10px;width:38.5px;text-align:right;color:#bec0c1;">20</div><div class="m" style="left:593px;top:429.10px"><span style="color:#e48a8a">SocketAddress       </span><span style="color:#d6d0c0">clientAddress;</span></div><div class="m" style="left:531px;top:444.71px;width:38.5px;text-align:right;color:#bec0c1;">21</div><div class="m" style="left:593px;top:444.71px"><span style="color:#d2b2ba">char                </span><span style="color:#d6d0c0">receiveBuf[</span><span style="color:#8c7048">1024</span><span style="color:#d6d0c0">] = { };</span></div><div class="m" style="left:531px;top:460.31px;width:38.5px;text-align:right;color:#bec0c1;">22</div><div class="m" style="left:531px;top:475.92px;width:38.5px;text-align:right;color:#bec0c1;">23</div><div class="m" style="left:593px;top:475.92px"><span style="color:#5ab6c2;font-style:italic">const</span><span style="color:#d6d0c0"> </span><span style="color:#d2b2ba">int           </span><span style="color:#d6d0c0">OFF = </span><span style="color:#8c7048">0</span><span style="color:#d6d0c0">;</span></div><div class="m" style="left:531px;top:491.53px;width:38.5px;text-align:right;color:#bec0c1;">24</div><div class="m" style="left:593px;top:491.53px"><span style="color:#5ab6c2;font-style:italic">const</span><span style="color:#d6d0c0"> </span><span style="color:#d2b2ba">int           </span><span style="color:#d6d0c0">ON = </span><span style="color:#8c7048">1</span><span style="color:#d6d0c0">;</span></div><div class="m" style="left:531px;top:507.13px;width:38.5px;text-align:right;color:#bec0c1;">25</div><div class="m" style="left:531px;top:522.74px;width:38.5px;text-align:right;color:#bec0c1;">26</div><div class="m" style="left:593px;top:522.74px"><span style="color:#e48a8a">DigitalOut          </span><span style="color:#d6d0c0">sw(</span><span style="color:#98b878;font-style:italic">LED1</span><span style="color:#d6d0c0">);</span></div><div class="m" style="left:531px;top:538.34px;width:38.5px;text-align:right;color:#bec0c1;">27</div><div class="m" style="left:593px;top:538.34px"><span style="color:#d2b2ba">float               </span><span style="color:#d6d0c0">roomTemp = </span><span style="color:#8c7048">21.8</span><span style="color:#d6d0c0">;        </span><span style="color:#a8abb0;font-style:italic">// A temperature sensor output</span></div><div class="m" style="left:531px;top:553.95px;width:38.5px;text-align:right;color:#bec0c1;">28</div><div class="m" style="left:593px;top:553.95px"><span style="color:#5ab6c2;font-style:italic">const</span><span style="color:#d6d0c0"> string        </span><span style="color:#d6d0c0">PASSWORD = </span><span style="color:#d6a862">"secret"</span><span style="color:#d6d0c0">;    </span><span style="color:#a8abb0;font-style:italic">// change as you like</span></div><div class="m" style="left:531px;top:569.55px;width:38.5px;text-align:right;color:#bec0c1;">29</div><div class="m" style="left:593px;top:569.55px"><span style="color:#5ab6c2;font-style:italic">const</span><span style="color:#d6d0c0"> string        </span><span style="color:#d6d0c0">HTTP_OK = </span><span style="color:#d6a862">"HTTP/1.0 200 OK"</span><span style="color:#d6d0c0">;</span></div><div class="m" style="left:531px;top:585.16px;width:38.5px;text-align:right;color:#bec0c1;">30</div><div class="m" style="left:593px;top:585.16px"><span style="color:#5ab6c2;font-style:italic">const</span><span style="color:#d6d0c0"> string        </span><span style="color:#d6d0c0">MOVED_PERM = </span><span style="color:#d6a862">"HTTP/1.0 301 Moved Permanently\r\nLocation: "</span><span style="color:#d6d0c0">;</span></div><div class="m" style="left:531px;top:600.76px;width:38.5px;text-align:right;color:#bec0c1;">31</div><div class="m" style="left:593px;top:600.76px"><span style="color:#5ab6c2;font-style:italic">const</span><span style="color:#d6d0c0"> string        </span><span style="color:#d6d0c0">UNAUTHORIZED = </span><span style="color:#d6a862">"HTTP/1.0 401 Unauthorized"</span><span style="color:#d6d0c0">;</span></div><div class="m" style="left:531px;top:616.37px;width:38.5px;text-align:right;color:#bec0c1;">32</div><div class="m" style="left:593px;top:616.37px"><span style="color:#d6d0c0">string              </span><span style="color:#d6d0c0">httpHeader;             </span><span style="color:#a8abb0;font-style:italic">// HTTP header</span></div><div class="m" style="left:531px;top:631.97px;width:38.5px;text-align:right;color:#bec0c1;">33</div><div class="m" style="left:593px;top:631.97px"><span style="color:#d6d0c0">string              </span><span style="color:#d6d0c0">httpContent;            </span><span style="color:#a8abb0;font-style:italic">// HTTP content</span></div><div class="m" style="left:531px;top:647.58px;width:38.5px;text-align:right;color:#bec0c1;">34</div><div class="m" style="left:531px;top:663.18px;width:38.5px;text-align:right;color:#bec0c1;">35</div><div class="m" style="left:593px;top:663.18px"><span style="color:#a8abb0;font-style:italic">/*</span></div><div class="a" style="left:577px;top:665.5px;width:8px;height:1.5px;background:#bec0c1;"></div></div></div><div class="a" style="left:1493px;top:127px;width:12px;height:540px;background:#4a4c4e;"></div><div class="a" style="left:1493px;top:140px;width:12px;height:53px;background:#535557;border:1px solid #626466"></div><div class="a" style="left:1493px;top:127px;width:12px;height:12px;background:#4e5052;border:1px solid #5c5e60"></div><svg style="left:1493px;top:127px" width="12" height="12" viewBox="0 0 12 12"><path d="M2.5 8 L6 4 L9.5 8 Z" fill="#cfcfcf"/></svg><div class="a" style="left:1493px;top:655px;width:12px;height:12px;background:#4e5052;border:1px solid #5c5e60"></div><svg style="left:1493px;top:655px" width="12" height="12" viewBox="0 0 12 12"><path d="M2.5 4 L6 8 L9.5 4 Z" fill="#cfcfcf"/></svg><div class="a" style="left:1494.5px;top:140px;width:9px;height:1.6px;background:#e8e8e8;"></div><div class="a" style="left:1495px;top:201px;width:9px;height:2px;background:#8080d0;"></div><div class="a" style="left:531px;top:667px;width:974px;height:1px;background:#202122;"></div><div class="a" style="left:1505px;top:105px;width:1.7px;height:895px;background:#202122;"></div><div class="a" style="left:531px;top:668px;width:974px;height:22px;background:#404244;"></div><div class="t" style="left:536px;top:672.00px;color:#d0d0d0;letter-spacing:0.75px">Compile Output</div><div class="a" style="left:665px;top:671px;width:1px;height:16px;background:#353739;"></div><svg style="left:674px;top:672px" width="16" height="14" viewBox="0 0 16 14"><path d="M5 1 V6" stroke="#d0d0d0" stroke-width="1.4"/><path d="M1.5 6.5 H8.5 L9.5 11 H0.5 Z" fill="#d0d0d0"/><path d="M10.5 8 H14.5 V13 H10.5 Z" fill="none" stroke="#d0d0d0" stroke-width="1"/><path d="M12.5 6 V8" stroke="#d0d0d0" stroke-width="1"/></svg><svg style="left:698px;top:672px" width="10" height="14" viewBox="0 0 10 14"><path d="M7 1.5 L2.5 7 L7 12.5" fill="none" stroke="#6a6c6e" stroke-width="1.2"/></svg><svg style="left:720px;top:672px" width="10" height="14" viewBox="0 0 10 14"><path d="M3 1.5 L7.5 7 L3 12.5" fill="none" stroke="#6a6c6e" stroke-width="1.2"/></svg><div class="a" style="left:741px;top:673px;width:11px;height:11px;background:#6a6c6e;"></div><svg style="left:762px;top:672px" width="14" height="14" viewBox="0 0 14 14"><path d="M7 1.5 V12.5 M1.5 7 H12.5" stroke="#e0e0e0" stroke-width="1.6"/></svg><svg style="left:784px;top:672px" width="14" height="14" viewBox="0 0 14 14"><path d="M1.5 7 H12.5" stroke="#e0e0e0" stroke-width="1.6"/></svg><svg style="left:1466px;top:673px" width="12" height="10" viewBox="0 0 12 10"><path d="M1.5 7.5 L6 3 L10.5 7.5" fill="none" stroke="#d0d0d0" stroke-width="1.3"/></svg><svg style="left:1490.5px;top:675.5px" width="12" height="10" viewBox="0 0 12 10"><rect x="0.6" y="0.6" width="10" height="7.6" fill="#262728" stroke="#d0d0d0" stroke-width="1.2"/><path d="M3.6 4 H7.6 L5.6 6 Z" fill="#d0d0d0"/></svg><div class="a" style="left:531px;top:690px;width:962px;height:310px;background:#2e2f30;"></div><div class="m" style="left:535.3px;top:692.10px;color:#d0d0d0">Elf2Bin: test03</div><div class="m" style="left:535.3px;top:707.68px;color:#d0d0d0">| Module         |           .text |       .data |          .bss |</div><div class="m" style="left:535.3px;top:723.25px;color:#d0d0d0">|----------------|-----------------|-------------|---------------|</div><div class="m" style="left:535.3px;top:738.83px;color:#d0d0d0">| [fill]         |       444(+444) |     16(+16) |       69(+69) |</div><div class="m" style="left:535.3px;top:754.40px;color:#d0d0d0">| [lib]/c.a      |   29374(+29374) | 2472(+2472) |       89(+89) |</div><div class="m" style="left:535.3px;top:769.98px;color:#d0d0d0">| [lib]/gcc.a    |     6952(+6952) |       0(+0) |         0(+0) |</div><div class="m" style="left:535.3px;top:785.55px;color:#d0d0d0">| [lib]/misc     |       252(+252) |     16(+16) |       28(+28) |</div><div class="m" style="left:535.3px;top:801.12px;color:#d0d0d0">| [lib]/nosys.a  |         32(+32) |       0(+0) |         0(+0) |</div><div class="m" style="left:535.3px;top:816.70px;color:#d0d0d0">| [lib]/stdc++.a |     9172(+9172) |     44(+44) |     204(+204) |</div><div class="m" style="left:535.3px;top:832.27px;color:#d0d0d0">| main.o         |     7214(+7214) |       8(+8) |   2184(+2184) |</div><div class="m" style="left:535.3px;top:847.85px;color:#d0d0d0">| mbed/mbed-os   | 167540(+167540) |   548(+548) | 33290(+33290) |</div><div class="m" style="left:535.3px;top:863.42px;color:#d0d0d0">| Subtotals      | 220980(+220980) | 3104(+3104) | 35864(+35864) |</div><div class="m" style="left:535.3px;top:879.00px;color:#d0d0d0">Total Static RAM memory (data + bss): 38968(+38968) bytes</div><div class="m" style="left:535.3px;top:894.58px;color:#d0d0d0">Total Flash memory (text + data): 224084(+224084) bytes</div><div class="m" style="left:535.3px;top:910.15px;color:#d0d0d0"></div><div class="m" style="left:535.3px;top:925.73px;color:#d0d0d0">Image: ./BUILD/ARCH_MAX/GCC_ARM-DEBUG/test03.bin</div><div class="m" style="left:535.3px;top:941.30px;color:#d0d0d0">[mbed] Working path "/home/zoli/src/arm/app/test03" (program)</div><div class="m" style="left:535.3px;top:956.88px;color:#26857e">16:57:23: The process "/home/zoli/.local/bin/mbed-os_debug" exited normally.</div><div class="m" style="left:535.3px;top:972.45px;color:#26857e">16:57:23: Elapsed time: 02:47.</div><div class="a" style="left:1493px;top:690px;width:12px;height:310px;background:#4a4c4e;"></div><div class="a" style="left:1493px;top:963px;width:12px;height:24px;background:#535557;border:1px solid #626466"></div><div class="a" style="left:1493px;top:690px;width:12px;height:12px;background:#4e5052;border:1px solid #5c5e60"></div><svg style="left:1493px;top:690px" width="12" height="12" viewBox="0 0 12 12"><path d="M2.5 8 L6 4 L9.5 8 Z" fill="#cfcfcf"/></svg><div class="a" style="left:1493px;top:988px;width:12px;height:12px;background:#4e5052;border:1px solid #5c5e60"></div><svg style="left:1493px;top:988px" width="12" height="12" viewBox="0 0 12 12"><path d="M2.5 4 L6 8 L9.5 4 Z" fill="#cfcfcf"/></svg><div class="a" style="left:1506px;top:105px;width:305px;height:22px;background:#404244;"></div><div class="t" style="left:1511px;top:108.50px;color:#d0d0d0;">Outline</div><svg style="left:1731px;top:109px" width="10" height="14" viewBox="0 0 10 14"><path d="M1.5 5.5 L5 1.5 L8.5 5.5 Z M1.5 8.5 L5 12.5 L8.5 8.5 Z" fill="#c8c8c8"/></svg><div class="a" style="left:1744px;top:108px;width:1px;height:16px;background:#353739;"></div><div class="a" style="left:1745px;top:106px;width:22px;height:20px;background:#2b2c2e;"></div><svg style="left:1749.5px;top:111.5px" width="14" height="9" viewBox="0 0 14 9"><path d="M5 1 H3.8 A3.2 3.2 0 0 0 3.8 7.4 H5 M8.6 1 H9.8 A3.2 3.2 0 0 1 9.8 7.4 H8.6 M4.4 4.2 H9.2" fill="none" stroke="#d8d8d8" stroke-width="1.4"/></svg><svg style="left:1772px;top:111px" width="15" height="11" viewBox="0 0 15 11"><rect x="0.6" y="0.6" width="6.4" height="9.6" fill="none" stroke="#d0d0d0" stroke-width="1.2"/><path d="M0.6 5.4 H7" stroke="#d0d0d0" stroke-width="1.1"/><path d="M8.6 5.8 H13.4 M11 3.4 V8.2" stroke="#d0d0d0" stroke-width="1.2"/></svg><svg style="left:1795.5px;top:112.5px" width="12" height="10" viewBox="0 0 12 10"><rect x="0.6" y="0.6" width="10" height="7.6" fill="#262728" stroke="#d0d0d0" stroke-width="1.2"/><path d="M3.6 4 H7.6 L5.6 6 Z" fill="#d0d0d0"/></svg><div class="a" style="left:1506px;top:127px;width:293px;height:273px;background:#2e2f30;"></div><div class="a" style="left:1506px;top:127px;width:293px;height:273px;overflow:hidden"><div class="a" style="left:-1506px;top:-127px;width:1920px;height:1080px"><svg style="left:1528.8px;top:131.1px" width="9" height="10" viewBox="0 0 9 10"><circle cx="2.2" cy="2" r="1.6" fill="#a4a4a4"/><circle cx="2.2" cy="7.4" r="1.6" fill="#a4a4a4"/><circle cx="7" cy="2" r="1.6" fill="#a4a4a4"/><circle cx="7" cy="7.4" r="1.6" fill="#a4a4a4"/></svg><div class="t" style="left:1546px;top:127.60px;color:#d0d0d0;">std</div><svg style="left:1526.3px;top:146.06px" width="14" height="14" viewBox="0 0 14 14"><rect x="2.5" y="3.7" width="9" height="6.6" transform="rotate(-38 7 7)" fill="#3ab8d0" stroke="#151a1c" stroke-width="0.7"/></svg><div class="t" style="left:1546px;top:145.06px;color:#d0d0d0;">net: EthernetInterface *</div><svg style="left:1526.3px;top:163.51999999999998px" width="14" height="14" viewBox="0 0 14 14"><rect x="2.5" y="3.7" width="9" height="6.6" transform="rotate(-38 7 7)" fill="#3ab8d0" stroke="#151a1c" stroke-width="0.7"/></svg><div class="t" style="left:1546px;top:162.52px;color:#d0d0d0;">server: TCPServer</div><svg style="left:1526.3px;top:180.98px" width="14" height="14" viewBox="0 0 14 14"><rect x="2.5" y="3.7" width="9" height="6.6" transform="rotate(-38 7 7)" fill="#3ab8d0" stroke="#151a1c" stroke-width="0.7"/></svg><div class="t" style="left:1546px;top:179.98px;color:#d0d0d0;">clientSocket: TCPSocket</div><svg style="left:1526.3px;top:198.44px" width="14" height="14" viewBox="0 0 14 14"><rect x="2.5" y="3.7" width="9" height="6.6" transform="rotate(-38 7 7)" fill="#3ab8d0" stroke="#151a1c" stroke-width="0.7"/></svg><div class="t" style="left:1546px;top:197.44px;color:#d0d0d0;">clientAddress: SocketAddress</div><svg style="left:1526.3px;top:215.9px" width="14" height="14" viewBox="0 0 14 14"><rect x="2.5" y="3.7" width="9" height="6.6" transform="rotate(-38 7 7)" fill="#3ab8d0" stroke="#151a1c" stroke-width="0.7"/></svg><div class="t" style="left:1546px;top:214.90px;color:#d0d0d0;">receiveBuf: char[]</div><svg style="left:1526.3px;top:233.36px" width="14" height="14" viewBox="0 0 14 14"><rect x="2.5" y="3.7" width="9" height="6.6" transform="rotate(-38 7 7)" fill="#3ab8d0" stroke="#151a1c" stroke-width="0.7"/></svg><div class="t" style="left:1546px;top:232.36px;color:#d0d0d0;">OFF: const int</div><svg style="left:1526.3px;top:250.82px" width="14" height="14" viewBox="0 0 14 14"><rect x="2.5" y="3.7" width="9" height="6.6" transform="rotate(-38 7 7)" fill="#3ab8d0" stroke="#151a1c" stroke-width="0.7"/></svg><div class="t" style="left:1546px;top:249.82px;color:#d0d0d0;">ON: const int</div><svg style="left:1526.3px;top:268.28px" width="14" height="14" viewBox="0 0 14 14"><rect x="2.5" y="3.7" width="9" height="6.6" transform="rotate(-38 7 7)" fill="#e05080" stroke="#151a1c" stroke-width="0.7"/></svg><div class="t" style="left:1546px;top:267.28px;color:#d0d0d0;">sw(LED1): DigitalOut</div><svg style="left:1526.3px;top:285.74px" width="14" height="14" viewBox="0 0 14 14"><rect x="2.5" y="3.7" width="9" height="6.6" transform="rotate(-38 7 7)" fill="#3ab8d0" stroke="#151a1c" stroke-width="0.7"/></svg><div class="t" style="left:1546px;top:284.74px;color:#d0d0d0;">roomTemp: float</div><svg style="left:1526.3px;top:303.20000000000005px" width="14" height="14" viewBox="0 0 14 14"><rect x="2.5" y="3.7" width="9" height="6.6" transform="rotate(-38 7 7)" fill="#3ab8d0" stroke="#151a1c" stroke-width="0.7"/></svg><div class="t" style="left:1546px;top:302.20px;color:#d0d0d0;">PASSWORD: const string</div><svg style="left:1526.3px;top:320.65999999999997px" width="14" height="14" viewBox="0 0 14 14"><rect x="2.5" y="3.7" width="9" height="6.6" transform="rotate(-38 7 7)" fill="#3ab8d0" stroke="#151a1c" stroke-width="0.7"/></svg><div class="t" style="left:1546px;top:319.66px;color:#d0d0d0;">HTTP_OK: const string</div><svg style="left:1526.3px;top:338.12px" width="14" height="14" viewBox="0 0 14 14"><rect x="2.5" y="3.7" width="9" height="6.6" transform="rotate(-38 7 7)" fill="#3ab8d0" stroke="#151a1c" stroke-width="0.7"/></svg><div class="t" style="left:1546px;top:337.12px;color:#d0d0d0;">MOVED_PERM: const string</div><svg style="left:1526.3px;top:355.58000000000004px" width="14" height="14" viewBox="0 0 14 14"><rect x="2.5" y="3.7" width="9" height="6.6" transform="rotate(-38 7 7)" fill="#3ab8d0" stroke="#151a1c" stroke-width="0.7"/></svg><div class="t" style="left:1546px;top:354.58px;color:#d0d0d0;">UNAUTHORIZED: const string</div><svg style="left:1526.3px;top:373.03999999999996px" width="14" height="14" viewBox="0 0 14 14"><rect x="2.5" y="3.7" width="9" height="6.6" transform="rotate(-38 7 7)" fill="#3ab8d0" stroke="#151a1c" stroke-width="0.7"/></svg><div class="t" style="left:1546px;top:372.04px;color:#d0d0d0;">httpHeader: string</div><svg style="left:1526.3px;top:390.5px" width="14" height="14" viewBox="0 0 14 14"><rect x="2.5" y="3.7" width="9" height="6.6" transform="rotate(-38 7 7)" fill="#3ab8d0" stroke="#151a1c" stroke-width="0.7"/></svg><div class="t" style="left:1546px;top:389.50px;color:#d0d0d0;">httpContent: string</div></div></div><div class="a" style="left:1799px;top:127px;width:12px;height:273px;background:#4a4c4e;"></div><div class="a" style="left:1799px;top:140px;width:12px;height:168px;background:#535557;border:1px solid #626466"></div><div class="a" style="left:1799px;top:127px;width:12px;height:12px;background:#4e5052;border:1px solid #5c5e60"></div><svg style="left:1799px;top:127px" width="12" height="12" viewBox="0 0 12 12"><path d="M2.5 8 L6 4 L9.5 8 Z" fill="#cfcfcf"/></svg><div class="a" style="left:1799px;top:388px;width:12px;height:12px;background:#4e5052;border:1px solid #5c5e60"></div><svg style="left:1799px;top:388px" width="12" height="12" viewBox="0 0 12 12"><path d="M2.5 4 L6 8 L9.5 4 Z" fill="#cfcfcf"/></svg><div class="a" style="left:1507px;top:400px;width:292px;height:12px;background:#4a4c4e;"></div><div class="a" style="left:1519px;top:400px;width:226px;height:12px;background:#535557;border:1px solid #626466"></div><div class="a" style="left:1507px;top:400px;width:12px;height:12px;background:#4e5052;border:1px solid #5c5e60"></div><svg style="left:1507px;top:400px" width="12" height="12" viewBox="0 0 12 12"><path d="M8 2.5 L4 6 L8 9.5 Z" fill="#cfcfcf"/></svg><div class="a" style="left:1787px;top:400px;width:12px;height:12px;background:#4e5052;border:1px solid #5c5e60"></div><svg style="left:1787px;top:400px" width="12" height="12" viewBox="0 0 12 12"><path d="M4 2.5 L8 6 L4 9.5 Z" fill="#cfcfcf"/></svg><div class="a" style="left:1799px;top:400px;width:12px;height:12px;background:#2a2b2c;"></div><div class="a" style="left:1506px;top:412px;width:305px;height:1.5px;background:#202122;"></div><div class="a" style="left:1506px;top:413.5px;width:305px;height:21.5px;background:#404244;"></div><div class="t" style="left:1511px;top:417.00px;color:#d0d0d0;">Class View</div><svg style="left:1731px;top:418px" width="10" height="14" viewBox="0 0 10 14"><path d="M1.5 5.5 L5 1.5 L8.5 5.5 Z M1.5 8.5 L5 12.5 L8.5 8.5 Z" fill="#c8c8c8"/></svg><div class="a" style="left:1744px;top:417px;width:1px;height:16px;background:#353739;"></div><div class="a" style="left:1745px;top:414px;width:22px;height:21px;background:#2b2c2e;"></div><svg style="left:1772px;top:420px" width="15" height="11" viewBox="0 0 15 11"><rect x="0.6" y="0.6" width="6.4" height="9.6" fill="none" stroke="#d0d0d0" stroke-width="1.2"/><path d="M0.6 5.4 H7" stroke="#d0d0d0" stroke-width="1.1"/><path d="M8.6 5.8 H13.4 M11 3.4 V8.2" stroke="#d0d0d0" stroke-width="1.2"/></svg><svg style="left:1795.5px;top:421.5px" width="12" height="10" viewBox="0 0 12 10"><rect x="0.6" y="0.6" width="10" height="7.6" fill="#262728" stroke="#d0d0d0" stroke-width="1.2"/><path d="M3.6 4 H7.6 L5.6 6 Z" fill="#d0d0d0"/></svg><div class="a" style="left:1506px;top:435px;width:293px;height:390px;background:#2e2f30;"></div><svg style="left:1747.5px;top:415.2px" width="18" height="18" viewBox="0 0 18 18"><rect x="2" y="2.8" width="6.2" height="5" transform="rotate(-40 5 5.3)" fill="#d8cc58"/><rect x="10.4" y="4.3" width="5.2" height="4" transform="rotate(-40 13 6.3)" fill="#d85888"/><rect x="10.4" y="11.2" width="5.2" height="4" transform="rotate(-40 13 13.2)" fill="#3ab8d0"/><path d="M9.5 7 V12.8 H11.5" stroke="#e0e0e0" stroke-width="1.1" fill="none"/></svg><div class="a" style="left:1506px;top:435px;width:293px;height:390px;overflow:hidden"><div class="a" style="left:-1506px;top:-435px;width:1920px;height:1080px"><svg style="left:1509.4px;top:439.9px" width="10" height="8" viewBox="0 0 10 8"><path d="M0.8 2 L9.2 2 L5 6.8 Z" fill="#b4b4b4"/></svg><svg style="left:1526px;top:436.9px" width="15" height="14" viewBox="0 0 15 14"><path d="M0.3 0.3 H6.5 L7.5 1.3 H12.6 V12.9 H0.3 Z" fill="#f6f2ea"/><path d="M2 3.2 H14.6 V13.3 H2 Z" fill="url(#fg)"/><path d="M14.2 3.2 V13.3" stroke="#8a3a10" stroke-width="0.8"/></svg><div class="t" style="left:1546.0px;top:436.70px;color:#d0d0d0;">test03</div><svg style="left:1526.7px;top:456.34px" width="8" height="10" viewBox="0 0 8 10"><path d="M2.4 0.8 L6.9 5 L2.4 9.2 Z" fill="#b4b4b4"/></svg><svg style="left:1545.1px;top:457.64px" width="9" height="10" viewBox="0 0 9 10"><circle cx="2.2" cy="2" r="1.6" fill="#a4a4a4"/><circle cx="2.2" cy="7.4" r="1.6" fill="#a4a4a4"/><circle cx="7" cy="2" r="1.6" fill="#a4a4a4"/><circle cx="7" cy="7.4" r="1.6" fill="#a4a4a4"/></svg><svg style="left:1526.7px;top:473.78px" width="8" height="10" viewBox="0 0 8 10"><path d="M2.4 0.8 L6.9 5 L2.4 9.2 Z" fill="#b4b4b4"/></svg><svg style="left:1545.1px;top:475.08px" width="9" height="10" viewBox="0 0 9 10"><circle cx="2.2" cy="2" r="1.6" fill="#a4a4a4"/><circle cx="2.2" cy="7.4" r="1.6" fill="#a4a4a4"/><circle cx="7" cy="2" r="1.6" fill="#a4a4a4"/><circle cx="7" cy="7.4" r="1.6" fill="#a4a4a4"/></svg><div class="t" style="left:1562.5px;top:471.58px;color:#d0d0d0;">__gnu_cxx</div><svg style="left:1526.7px;top:491.21999999999997px" width="8" height="10" viewBox="0 0 8 10"><path d="M2.4 0.8 L6.9 5 L2.4 9.2 Z" fill="#b4b4b4"/></svg><svg style="left:1545.1px;top:492.52px" width="9" height="10" viewBox="0 0 9 10"><circle cx="2.2" cy="2" r="1.6" fill="#a4a4a4"/><circle cx="2.2" cy="7.4" r="1.6" fill="#a4a4a4"/><circle cx="7" cy="2" r="1.6" fill="#a4a4a4"/><circle cx="7" cy="7.4" r="1.6" fill="#a4a4a4"/></svg><div class="t" style="left:1562.5px;top:489.02px;color:#d0d0d0;">events</div><svg style="left:1526.7px;top:508.66px" width="8" height="10" viewBox="0 0 8 10"><path d="M2.4 0.8 L6.9 5 L2.4 9.2 Z" fill="#b4b4b4"/></svg><svg style="left:1545.1px;top:509.96000000000004px" width="9" height="10" viewBox="0 0 9 10"><circle cx="2.2" cy="2" r="1.6" fill="#a4a4a4"/><circle cx="2.2" cy="7.4" r="1.6" fill="#a4a4a4"/><circle cx="7" cy="2" r="1.6" fill="#a4a4a4"/><circle cx="7" cy="7.4" r="1.6" fill="#a4a4a4"/></svg><div class="t" style="left:1562.5px;top:506.46px;color:#d0d0d0;">mbed</div><svg style="left:1525.7px;top:527.1px" width="10" height="8" viewBox="0 0 10 8"><path d="M0.8 2 L9.2 2 L5 6.8 Z" fill="#b4b4b4"/></svg><svg style="left:1545.1px;top:527.4px" width="9" height="10" viewBox="0 0 9 10"><circle cx="2.2" cy="2" r="1.6" fill="#a4a4a4"/><circle cx="2.2" cy="7.4" r="1.6" fill="#a4a4a4"/><circle cx="7" cy="2" r="1.6" fill="#a4a4a4"/><circle cx="7" cy="7.4" r="1.6" fill="#a4a4a4"/></svg><div class="t" style="left:1562.5px;top:523.90px;color:#d0d0d0;">mbed_cellular_trace</div><svg style="left:1559px;top:542.34px" width="14" height="14" viewBox="0 0 14 14"><rect x="2.5" y="3.7" width="9" height="6.6" transform="rotate(-38 7 7)" fill="#e05080" stroke="#151a1c" stroke-width="0.7"/></svg><div class="t" style="left:1579.0px;top:541.34px;color:#d0d0d0;">mutex_release ()</div><svg style="left:1559px;top:559.78px" width="14" height="14" viewBox="0 0 14 14"><rect x="2.5" y="3.7" width="9" height="6.6" transform="rotate(-38 7 7)" fill="#e05080" stroke="#151a1c" stroke-width="0.7"/></svg><div class="t" style="left:1579.0px;top:558.78px;color:#d0d0d0;">mutex_release_function_set (void (</div><svg style="left:1559px;top:577.22px" width="14" height="14" viewBox="0 0 14 14"><rect x="2.5" y="3.7" width="9" height="6.6" transform="rotate(-38 7 7)" fill="#e05080" stroke="#151a1c" stroke-width="0.7"/></svg><div class="t" style="left:1579.0px;top:576.22px;color:#d0d0d0;">mutex_wait ()</div><svg style="left:1559px;top:594.66px" width="14" height="14" viewBox="0 0 14 14"><rect x="2.5" y="3.7" width="9" height="6.6" transform="rotate(-38 7 7)" fill="#e05080" stroke="#151a1c" stroke-width="0.7"/></svg><div class="t" style="left:1579.0px;top:593.66px;color:#d0d0d0;">mutex_wait_function_set (void (*)()</div><svg style="left:1526.7px;top:613.3000000000001px" width="8" height="10" viewBox="0 0 8 10"><path d="M2.4 0.8 L6.9 5 L2.4 9.2 Z" fill="#b4b4b4"/></svg><svg style="left:1545.1px;top:614.6px" width="9" height="10" viewBox="0 0 9 10"><circle cx="2.2" cy="2" r="1.6" fill="#a4a4a4"/><circle cx="2.2" cy="7.4" r="1.6" fill="#a4a4a4"/><circle cx="7" cy="2" r="1.6" fill="#a4a4a4"/><circle cx="7" cy="7.4" r="1.6" fill="#a4a4a4"/></svg><div class="t" style="left:1562.5px;top:611.10px;color:#d0d0d0;">mbed_cellular_util</div><svg style="left:1526.7px;top:630.74px" width="8" height="10" viewBox="0 0 8 10"><path d="M2.4 0.8 L6.9 5 L2.4 9.2 Z" fill="#b4b4b4"/></svg><svg style="left:1545.1px;top:632.04px" width="9" height="10" viewBox="0 0 9 10"><circle cx="2.2" cy="2" r="1.6" fill="#a4a4a4"/><circle cx="2.2" cy="7.4" r="1.6" fill="#a4a4a4"/><circle cx="7" cy="2" r="1.6" fill="#a4a4a4"/><circle cx="7" cy="7.4" r="1.6" fill="#a4a4a4"/></svg><div class="t" style="left:1562.5px;top:628.54px;color:#d0d0d0;">rtos</div><svg style="left:1526.7px;top:648.1800000000001px" width="8" height="10" viewBox="0 0 8 10"><path d="M2.4 0.8 L6.9 5 L2.4 9.2 Z" fill="#b4b4b4"/></svg><svg style="left:1545.1px;top:649.48px" width="9" height="10" viewBox="0 0 9 10"><circle cx="2.2" cy="2" r="1.6" fill="#a4a4a4"/><circle cx="2.2" cy="7.4" r="1.6" fill="#a4a4a4"/><circle cx="7" cy="2" r="1.6" fill="#a4a4a4"/><circle cx="7" cy="7.4" r="1.6" fill="#a4a4a4"/></svg><div class="t" style="left:1562.5px;top:645.98px;color:#d0d0d0;">std</div><svg style="left:1526.7px;top:665.6200000000001px" width="8" height="10" viewBox="0 0 8 10"><path d="M2.4 0.8 L6.9 5 L2.4 9.2 Z" fill="#b4b4b4"/></svg><svg style="left:1545.1px;top:666.9200000000001px" width="9" height="10" viewBox="0 0 9 10"><circle cx="2.2" cy="2" r="1.6" fill="#a4a4a4"/><circle cx="2.2" cy="7.4" r="1.6" fill="#a4a4a4"/><circle cx="7" cy="2" r="1.6" fill="#a4a4a4"/><circle cx="7" cy="7.4" r="1.6" fill="#a4a4a4"/></svg><div class="t" style="left:1562.5px;top:663.42px;color:#d0d0d0;">utest</div><svg style="left:1526.7px;top:683.0600000000001px" width="8" height="10" viewBox="0 0 8 10"><path d="M2.4 0.8 L6.9 5 L2.4 9.2 Z" fill="#b4b4b4"/></svg><svg style="left:1542px;top:681.86px" width="14" height="13" viewBox="0 0 14 13"><path d="M4 1 H13 V7 H4 Z" fill="#e0d050"/><path d="M1 5 H10 V12 H1 Z" fill="#c8b840" stroke="#2e2f30" stroke-width="0.8"/></svg><svg style="left:1526.7px;top:700.5px" width="8" height="10" viewBox="0 0 8 10"><path d="M2.4 0.8 L6.9 5 L2.4 9.2 Z" fill="#b4b4b4"/></svg><svg style="left:1541px;top:697.3px" width="18" height="18" viewBox="0 0 18 18"><rect x="2" y="2.8" width="6.2" height="5" transform="rotate(-40 5 5.3)" fill="#5cc060"/><rect x="10.4" y="4.3" width="5.2" height="4" transform="rotate(-40 13 6.3)" fill="#d85888"/><rect x="10.4" y="11.2" width="5.2" height="4" transform="rotate(-40 13 13.2)" fill="#3ab8d0"/><path d="M9.5 7 V12.8 H11.5" stroke="#e0e0e0" stroke-width="1.1" fill="none"/></svg><div class="t" style="left:1562.5px;top:698.30px;color:#d0d0d0;">Anonymous:1001</div><svg style="left:1526.7px;top:717.94px" width="8" height="10" viewBox="0 0 8 10"><path d="M2.4 0.8 L6.9 5 L2.4 9.2 Z" fill="#b4b4b4"/></svg><svg style="left:1541px;top:714.74px" width="18" height="18" viewBox="0 0 18 18"><rect x="2" y="2.8" width="6.2" height="5" transform="rotate(-40 5 5.3)" fill="#5cc060"/><rect x="10.4" y="4.3" width="5.2" height="4" transform="rotate(-40 13 6.3)" fill="#d85888"/><rect x="10.4" y="11.2" width="5.2" height="4" transform="rotate(-40 13 13.2)" fill="#3ab8d0"/><path d="M9.5 7 V12.8 H11.5" stroke="#e0e0e0" stroke-width="1.1" fill="none"/></svg><div class="t" style="left:1562.5px;top:715.74px;color:#d0d0d0;">Anonymous:102</div><svg style="left:1526.7px;top:735.3800000000001px" width="8" height="10" viewBox="0 0 8 10"><path d="M2.4 0.8 L6.9 5 L2.4 9.2 Z" fill="#b4b4b4"/></svg><svg style="left:1541px;top:732.1800000000001px" width="18" height="18" viewBox="0 0 18 18"><rect x="2" y="2.8" width="6.2" height="5" transform="rotate(-40 5 5.3)" fill="#5cc060"/><rect x="10.4" y="4.3" width="5.2" height="4" transform="rotate(-40 13 6.3)" fill="#d85888"/><rect x="10.4" y="11.2" width="5.2" height="4" transform="rotate(-40 13 13.2)" fill="#3ab8d0"/><path d="M9.5 7 V12.8 H11.5" stroke="#e0e0e0" stroke-width="1.1" fill="none"/></svg><div class="t" style="left:1562.5px;top:733.18px;color:#d0d0d0;">Anonymous:1021</div><svg style="left:1526.7px;top:752.82px" width="8" height="10" viewBox="0 0 8 10"><path d="M2.4 0.8 L6.9 5 L2.4 9.2 Z" fill="#b4b4b4"/></svg><svg style="left:1541px;top:749.62px" width="18" height="18" viewBox="0 0 18 18"><rect x="2" y="2.8" width="6.2" height="5" transform="rotate(-40 5 5.3)" fill="#5cc060"/><rect x="10.4" y="4.3" width="5.2" height="4" transform="rotate(-40 13 6.3)" fill="#d85888"/><rect x="10.4" y="11.2" width="5.2" height="4" transform="rotate(-40 13 13.2)" fill="#3ab8d0"/><path d="M9.5 7 V12.8 H11.5" stroke="#e0e0e0" stroke-width="1.1" fill="none"/></svg><div class="t" style="left:1562.5px;top:750.62px;color:#d0d0d0;">Anonymous:1025</div><svg style="left:1526.7px;top:770.26px" width="8" height="10" viewBox="0 0 8 10"><path d="M2.4 0.8 L6.9 5 L2.4 9.2 Z" fill="#b4b4b4"/></svg><svg style="left:1541px;top:767.06px" width="18" height="18" viewBox="0 0 18 18"><rect x="2" y="2.8" width="6.2" height="5" transform="rotate(-40 5 5.3)" fill="#5cc060"/><rect x="10.4" y="4.3" width="5.2" height="4" transform="rotate(-40 13 6.3)" fill="#d85888"/><rect x="10.4" y="11.2" width="5.2" height="4" transform="rotate(-40 13 13.2)" fill="#3ab8d0"/><path d="M9.5 7 V12.8 H11.5" stroke="#e0e0e0" stroke-width="1.1" fill="none"/></svg><div class="t" style="left:1562.5px;top:768.06px;color:#d0d0d0;">Anonymous:103</div><svg style="left:1526.7px;top:787.7px" width="8" height="10" viewBox="0 0 8 10"><path d="M2.4 0.8 L6.9 5 L2.4 9.2 Z" fill="#b4b4b4"/></svg><svg style="left:1541px;top:784.5px" width="18" height="18" viewBox="0 0 18 18"><rect x="2" y="2.8" width="6.2" height="5" transform="rotate(-40 5 5.3)" fill="#5cc060"/><rect x="10.4" y="4.3" width="5.2" height="4" transform="rotate(-40 13 6.3)" fill="#d85888"/><rect x="10.4" y="11.2" width="5.2" height="4" transform="rotate(-40 13 13.2)" fill="#3ab8d0"/><path d="M9.5 7 V12.8 H11.5" stroke="#e0e0e0" stroke-width="1.1" fill="none"/></svg><div class="t" style="left:1562.5px;top:785.50px;color:#d0d0d0;">Anonymous:104</div><svg style="left:1526.7px;top:805.1400000000001px" width="8" height="10" viewBox="0 0 8 10"><path d="M2.4 0.8 L6.9 5 L2.4 9.2 Z" fill="#b4b4b4"/></svg><svg style="left:1541px;top:801.94px" width="18" height="18" viewBox="0 0 18 18"><rect x="2" y="2.8" width="6.2" height="5" transform="rotate(-40 5 5.3)" fill="#5cc060"/><rect x="10.4" y="4.3" width="5.2" height="4" transform="rotate(-40 13 6.3)" fill="#d85888"/><rect x="10.4" y="11.2" width="5.2" height="4" transform="rotate(-40 13 13.2)" fill="#3ab8d0"/><path d="M9.5 7 V12.8 H11.5" stroke="#e0e0e0" stroke-width="1.1" fill="none"/></svg><div class="t" style="left:1562.5px;top:802.94px;color:#d0d0d0;">Anonymous:105</div><svg style="left:1526.7px;top:822.58px" width="8" height="10" viewBox="0 0 8 10"><path d="M2.4 0.8 L6.9 5 L2.4 9.2 Z" fill="#b4b4b4"/></svg><svg style="left:1541px;top:819.38px" width="18" height="18" viewBox="0 0 18 18"><rect x="2" y="2.8" width="6.2" height="5" transform="rotate(-40 5 5.3)" fill="#5cc060"/><rect x="10.4" y="4.3" width="5.2" height="4" transform="rotate(-40 13 6.3)" fill="#d85888"/><rect x="10.4" y="11.2" width="5.2" height="4" transform="rotate(-40 13 13.2)" fill="#3ab8d0"/><path d="M9.5 7 V12.8 H11.5" stroke="#e0e0e0" stroke-width="1.1" fill="none"/></svg></div></div><div class="a" style="left:1799px;top:435px;width:12px;height:390px;background:#4a4c4e;"></div><div class="a" style="left:1799px;top:448px;width:12px;height:24px;background:#535557;border:1px solid #626466"></div><div class="a" style="left:1799px;top:435px;width:12px;height:12px;background:#4e5052;border:1px solid #5c5e60"></div><svg style="left:1799px;top:435px" width="12" height="12" viewBox="0 0 12 12"><path d="M2.5 8 L6 4 L9.5 8 Z" fill="#cfcfcf"/></svg><div class="a" style="left:1799px;top:813px;width:12px;height:12px;background:#4e5052;border:1px solid #5c5e60"></div><svg style="left:1799px;top:813px" width="12" height="12" viewBox="0 0 12 12"><path d="M2.5 4 L6 8 L9.5 4 Z" fill="#cfcfcf"/></svg><div class="a" style="left:1507px;top:825px;width:292px;height:12px;background:#4a4c4e;"></div><div class="a" style="left:1519px;top:825px;width:238px;height:12px;background:#535557;border:1px solid #626466"></div><div class="a" style="left:1507px;top:825px;width:12px;height:12px;background:#4e5052;border:1px solid #5c5e60"></div><svg style="left:1507px;top:825px" width="12" height="12" viewBox="0 0 12 12"><path d="M8 2.5 L4 6 L8 9.5 Z" fill="#cfcfcf"/></svg><div class="a" style="left:1787px;top:825px;width:12px;height:12px;background:#4e5052;border:1px solid #5c5e60"></div><svg style="left:1787px;top:825px" width="12" height="12" viewBox="0 0 12 12"><path d="M4 2.5 L8 6 L4 9.5 Z" fill="#cfcfcf"/></svg><div class="a" style="left:1799px;top:825px;width:12px;height:12px;background:#2a2b2c;"></div><div class="a" style="left:1506px;top:837px;width:305px;height:1.5px;background:#202122;"></div><div class="a" style="left:1506px;top:838.5px;width:305px;height:21px;background:#404244;"></div><div class="t" style="left:1511px;top:842.00px;color:#d0d0d0;">Bookmarks</div><svg style="left:1753px;top:842px" width="10" height="14" viewBox="0 0 10 14"><path d="M1.5 5.5 L5 1.5 L8.5 5.5 Z M1.5 8.5 L5 12.5 L8.5 8.5 Z" fill="#c8c8c8"/></svg><div class="a" style="left:1766px;top:842px;width:1px;height:16px;background:#353739;"></div><svg style="left:1772px;top:844px" width="15" height="11" viewBox="0 0 15 11"><rect x="0.6" y="0.6" width="6.4" height="9.6" fill="none" stroke="#d0d0d0" stroke-width="1.2"/><path d="M0.6 5.4 H7" stroke="#d0d0d0" stroke-width="1.1"/><path d="M8.6 5.8 H13.4 M11 3.4 V8.2" stroke="#d0d0d0" stroke-width="1.2"/></svg><svg style="left:1795.5px;top:845.5px" width="12" height="10" viewBox="0 0 12 10"><rect x="0.6" y="0.6" width="10" height="7.6" fill="#262728" stroke="#d0d0d0" stroke-width="1.2"/><path d="M3.6 4 H7.6 L5.6 6 Z" fill="#d0d0d0"/></svg><div class="a" style="left:1506px;top:859.5px;width:305px;height:140.5px;background:#2e2f30;"></div><div class="a" style="left:1507px;top:859.5px;width:304px;height:40px;background:#1f2021;"></div><div class="t" style="left:1512px;top:861.70px;color:#ffffff;font-weight:bold;letter-spacing:0.3px">main.cpp</div><div class="t" style="left:1789px;top:861.70px;color:#ffffff;font-weight:bold;letter-spacing:0.3px">41</div><div class="t" style="left:1512px;top:880.00px;color:#d8d8d8;letter-spacing:0.5px">FileHandle* mbed::mbed_override_console(int)</div><div class="a" style="left:1507px;top:899px;width:304px;height:1.3px;background:#a0a2a4;"></div><div class="a" style="left:175px;top:1000px;width:1636px;height:24px;background:#404244;"></div><div class="a" style="left:176.5px;top:1003px;width:21.5px;height:19px;background:#262829;"></div><svg style="left:181px;top:1006px" width="13" height="13" viewBox="0 0 13 13"><rect x="0.7" y="0.7" width="11.6" height="11.6" fill="#e0e0e0" stroke="#e0e0e0"/><rect x="2" y="2" width="4" height="9" fill="#262829"/></svg><div class="a" style="left:204.5px;top:1003px;width:183.5px;height:19px;background:#2e2f30;"></div><svg style="left:210px;top:1005px" width="16" height="16" viewBox="0 0 16 16"><circle cx="9" cy="6" r="4" fill="none" stroke="#c8c8c8" stroke-width="1.3"/><path d="M6.2 8.8 L1.5 13.5" stroke="#c8c8c8" stroke-width="1.6"/><path d="M11 12.5 L14 12.5 L12.5 14.3 Z" fill="#c8c8c8"/></svg><div class="t" style="left:229.8px;top:1005.50px;color:#8a8c8e;letter-spacing:0.6px">Type to locate (Ctrl...</div><div class="a" style="left:391px;top:1003px;width:1px;height:19px;background:#353739;"></div><div class="a" style="left:731.5px;top:1003px;width:120.5px;height:19.5px;background:#262829;"></div><div class="t" style="left:399.7px;top:1005.50px;color:#d0d0d0;">1</div><div class="t" style="left:412.6px;top:1005.50px;color:#d0d0d0;letter-spacing:0.7px">Issues</div><div class="t" style="left:466.5px;top:1005.50px;color:#d0d0d0;">2</div><div class="t" style="left:479.8px;top:1005.50px;color:#d0d0d0;letter-spacing:0.65px">Search Results</div><div class="t" style="left:586px;top:1005.50px;color:#d0d0d0;">3</div><div class="t" style="left:599.5px;top:1005.50px;color:#d0d0d0;letter-spacing:0.55px">Application Output</div><div class="t" style="left:734.4px;top:1005.50px;color:#d0d0d0;">4</div><div class="t" style="left:748.4px;top:1005.50px;color:#d0d0d0;letter-spacing:0.7px">Compile Output</div><div class="t" style="left:864px;top:1005.50px;color:#d0d0d0;">5</div><div class="t" style="left:878px;top:1005.50px;color:#d0d0d0;letter-spacing:0.4px">Debugger Console</div><div class="t" style="left:1008px;top:1005.50px;color:#d0d0d0;">8</div><div class="t" style="left:1022.5px;top:1005.50px;color:#d0d0d0;letter-spacing:0.55px">Test Results</div><svg style="left:1113px;top:1005px" width="10" height="14" viewBox="0 0 10 14"><path d="M1.5 5.5 L5 1.5 L8.5 5.5 Z M1.5 8.5 L5 12.5 L8.5 8.5 Z" fill="#c8c8c8"/></svg><svg style="left:1771px;top:1007px" width="12" height="8" viewBox="0 0 12 8"><path d="M1.5 6.5 L6 2 L10.5 6.5 Z" fill="#e0e0e0"/></svg><div class="a" style="left:1788px;top:1002px;width:23px;height:22px;background:#262829;"></div><svg style="left:1793px;top:1006px" width="13" height="13" viewBox="0 0 13 13"><rect x="0.7" y="0.7" width="11.6" height="11.6" fill="#e0e0e0" stroke="#e0e0e0"/><rect x="2" y="2" width="4" height="9" fill="#262829"/></svg></body></html>
